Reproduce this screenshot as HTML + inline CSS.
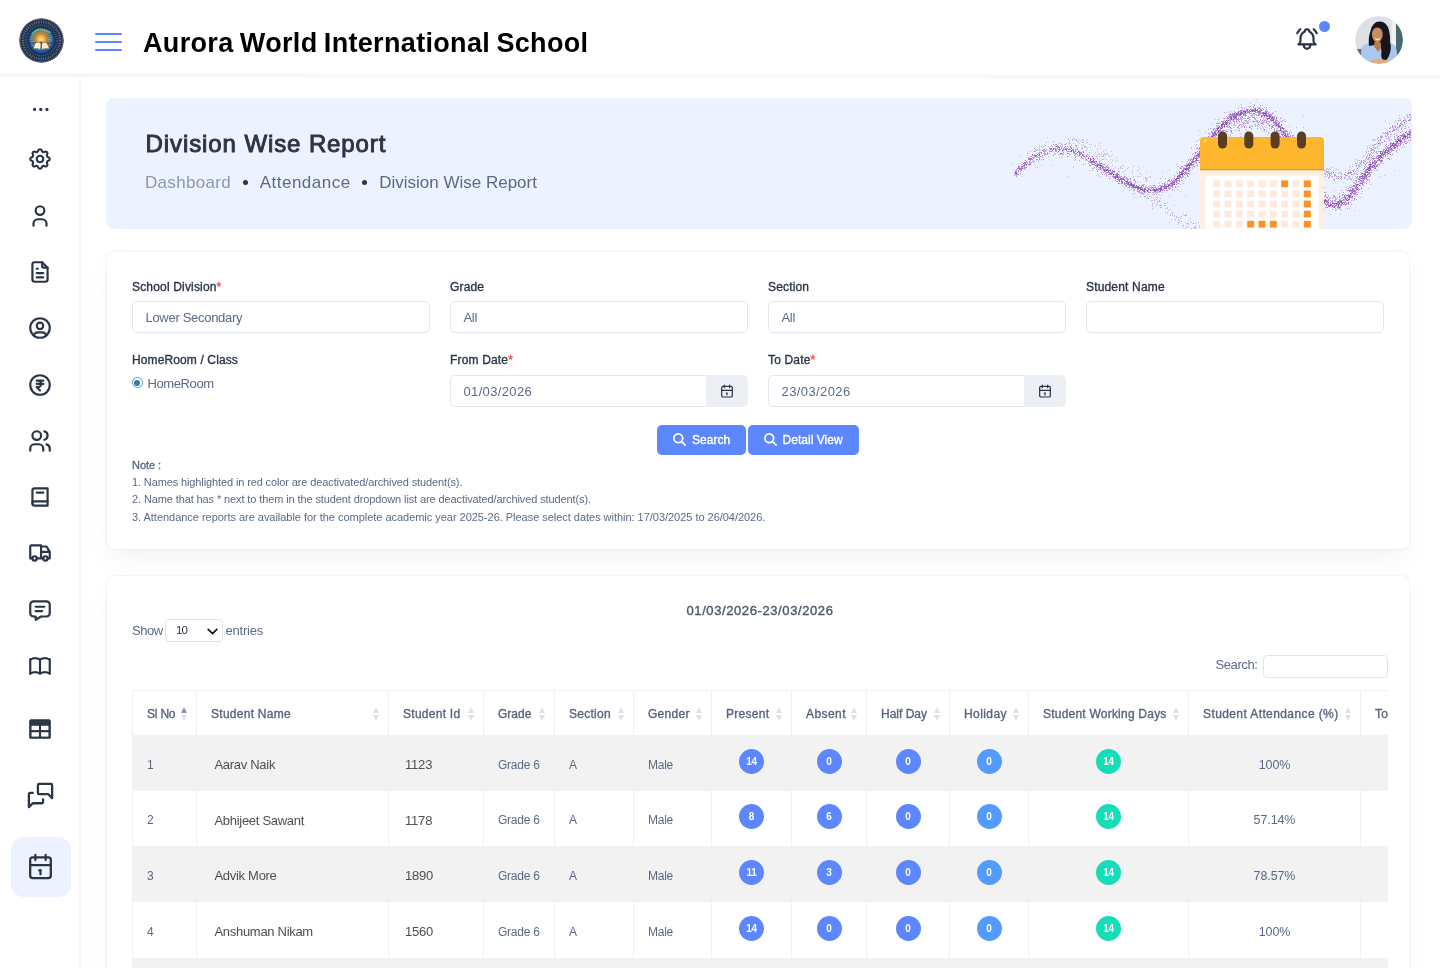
<!DOCTYPE html>
<html lang="en">
<head>
<meta charset="utf-8">
<title>Division Wise Report - Aurora World International School</title>
<style>
*{box-sizing:border-box;margin:0;padding:0}
html,body{width:1440px;height:968px;overflow:hidden;background:#fff}
body{will-change:transform;font-family:"Liberation Sans",sans-serif;color:#5a6a85;position:relative;font-size:12px}
svg{display:block}
.ico{fill:none;stroke:#2a3547;stroke-width:2;stroke-linecap:round;stroke-linejoin:round}

/* header */
header{position:absolute;left:0;top:0;width:1440px;height:73px;background:#fff;z-index:5}
header:after{content:"";position:absolute;left:-10px;right:-10px;top:73.5px;height:4.3px;background:#f7f7f7;transform:rotate(.075deg)}
.logo{position:absolute;left:19px;top:18px;width:45px;height:45px;border-radius:50%;overflow:hidden}
.burger{position:absolute;left:95px;top:32px;width:27px;height:19px}
.burger i{position:absolute;left:0;width:27px;height:1.8px;background:#5d87ff;border-radius:1px}
.school{position:absolute;left:143px;top:23.5px;font-size:27px;line-height:38px;font-weight:700;color:#000;letter-spacing:.33px;word-spacing:-1.5px;white-space:nowrap}
.bell{position:absolute;left:1294px;top:26px;width:26px;height:26px}
.dot{position:absolute;left:1319px;top:21px;width:11px;height:11px;border-radius:50%;background:#5d87ff}
.avatar{position:absolute;left:1355px;top:16px;width:48px;height:48px;border-radius:50%;overflow:hidden}

/* sidebar */
aside{position:absolute;left:0;top:74px;width:81px;height:894px;background:#fff;border-right:2px solid #f6f6f6}
aside .it{position:absolute;left:27px;width:26px;height:26px}
aside .act{position:absolute;left:11px;top:763px;width:60px;height:60px;border-radius:13px;background:#ecf2ff}

/* main */
main{position:absolute;left:81px;top:74px;width:1359px;height:894px}
.banner{position:absolute;left:25px;top:24px;width:1306px;height:131px;background:#ecf2ff;border-radius:8px;overflow:hidden}
.banner h1{position:absolute;left:39.6px;top:30.4px;font-size:24px;line-height:32px;font-weight:400;-webkit-text-stroke:.95px #2a3547;color:#2a3547;letter-spacing:.9px;white-space:nowrap}
.crumbs{position:absolute;left:39px;top:73px;font-size:17px;line-height:24px;color:#5a6a85;white-space:nowrap}
.crumbs .m{color:#8a98ae}
.crumbs b{display:inline-block;width:5px;height:5px;border-radius:50%;background:#2a3547;margin:0 12px 2px 12px;vertical-align:middle}
.card{position:absolute;background:#fff;border-radius:7px;box-shadow:0 0 2px rgba(145,158,171,.3),0 12px 24px -4px rgba(145,158,171,.12)}

/* form card */
.f{left:26px;top:178px;width:1302px;height:297px}
.f label{position:absolute;margin-top:1px;font-size:12px;line-height:16px;font-weight:400;-webkit-text-stroke:.35px #2a3547;color:#2a3547;letter-spacing:.17px;white-space:nowrap}
.f label em{color:#fa3e3e;font-style:normal;-webkit-text-stroke:.3px #fa3e3e}
.inp{position:absolute;height:32px;width:298px;border:1px solid #e1e7f1;border-radius:5px;background:#fff;font-size:13px;line-height:32px;padding-left:12.5px;color:#5a6a85;letter-spacing:-.3px;white-space:nowrap}
.inp.d{width:257px;border-radius:5px 0 0 5px}
.add{position:absolute;width:42px;height:32px;background:#ecf0f5;border-radius:0 5px 5px 0}
.add svg{position:absolute;left:13px;top:8px;stroke-width:1.8}
.radio{position:absolute;left:24.5px;top:125px;width:11px;height:11px;border-radius:50%;border:1px solid #5b95be;background:#fff}
.radio:after{content:"";position:absolute;left:1.5px;top:1.5px;width:6px;height:6px;border-radius:50%;background:#2e7d9f}
.rlab{position:absolute;left:40.5px;top:124px;font-size:13px;line-height:16px;color:#5a6a85;letter-spacing:-.4px}
.btn{position:absolute;top:172.5px;height:30px;background:#5d87ff;border-radius:5px;color:#fff;font-size:12px;font-weight:400;-webkit-text-stroke:.35px #fff;line-height:30px;white-space:nowrap;letter-spacing:.03px}
.btn svg{position:absolute;left:15px;top:7px;stroke:#fff;stroke-width:2.8}
.btn span{position:absolute;left:35px;top:0}
.note{position:absolute;left:25px;font-size:11px;line-height:14px;color:#5a6a85;white-space:nowrap;letter-spacing:-.04px}
.note.h{-webkit-text-stroke:.35px #5a6a85;color:#5a6a85;letter-spacing:-.05px}

/* table card */
.t{left:26px;top:502px;width:1302px;height:520px}
.rng{position:absolute;left:0;top:25.6px;width:1306px;text-align:center;font-size:13px;line-height:18px;font-weight:400;-webkit-text-stroke:.35px #46566b;color:#46566b;letter-spacing:.6px}
.len{position:absolute;left:25px;top:46.6px;font-size:13px;line-height:16px;color:#5a6a85;white-space:nowrap;letter-spacing:-.5px}
.sel{position:absolute;left:58px;top:43px;width:58px;height:23px;border:1px solid #dfe5ef;border-radius:4px;background:#fff;font-size:11.5px;line-height:21px;color:#2a3547;padding-left:10px;letter-spacing:-.9px}
.sel svg{position:absolute;left:40px;top:5px;stroke:#111;stroke-width:3}
.ent{position:absolute;left:118.5px;top:46.6px;font-size:13px;line-height:16px;color:#5a6a85;letter-spacing:-.2px}
.sl{position:absolute;left:1108.5px;top:81px;font-size:13px;line-height:16px;color:#5a6a85;letter-spacing:-.4px}
.sb{position:absolute;left:1155.5px;top:78.5px;width:125px;height:23px;border:1px solid #dfe5ef;border-radius:4px;background:#fff}
.tw{position:absolute;left:25px;top:114px;width:1256px;height:360px;overflow:hidden}
table{border-collapse:separate;border-spacing:0;table-layout:fixed;width:1400px}
th,td{border-left:1px solid #eef1f7;overflow:hidden;white-space:nowrap}
th{height:45px;border-top:1px solid #eef1f7;font-size:12px;font-weight:400;-webkit-text-stroke:.35px #56657f;color:#56657f;text-align:left;padding:1px 0 0 14px;position:relative;letter-spacing:.27px;background:#fff}
th:before,th:after{content:"";position:absolute;right:9px;border:3.5px solid transparent}
th:before{top:13px;border-bottom:6px solid #dde1ea}
th:after{top:23.5px;border-top:6px solid #dde1ea}
th.asc:before{border-bottom-color:#8e9ab3}
td{height:56px;font-size:12px;color:#5a6a85;padding:3px 0 0 14px;letter-spacing:-.25px}
tr.o td{background:#f2f2f2}
tr.s td{height:55px}
td.n{font-size:13px;color:#4f4f4f;padding-left:17.5px;letter-spacing:-.3px}
td.i{font-size:13px;color:#4f4f4f;padding-left:16px;letter-spacing:-.2px}
td.c{text-align:center;padding:0}
td.c b{display:inline-block;width:25px;height:25px;border-radius:50%;background:#5d87ff;color:#fff;font-size:10px;line-height:25px;font-weight:700;text-align:center;letter-spacing:-.3px;position:relative;top:-2px}
td.c b.h{background:#539bff}
td.c b.w{background:#13deb9}
td.p{text-align:center;padding:3px 0 0 0;font-size:12.5px;letter-spacing:-.1px}
</style>
</head>
<body>
<header>
  <div class="logo"><svg width="45" height="45" viewBox="0 0 45 45"><defs><radialGradient id="lg1" cx=".5" cy=".45" r=".55"><stop offset="0" stop-color="#3f8fc4"/><stop offset=".7" stop-color="#2766a3"/><stop offset="1" stop-color="#1c4f8a"/></radialGradient><radialGradient id="lg2"><stop offset="0" stop-color="#ffe9b0"/><stop offset=".5" stop-color="#f39a1c"/><stop offset="1" stop-color="#e08a12" stop-opacity=".0"/></radialGradient></defs>
<circle cx="22.5" cy="22.5" r="22.3" fill="#14305c"/>
<circle cx="22.5" cy="22.5" r="21.6" fill="none" stroke="#a8865a" stroke-width=".9" stroke-opacity=".75"/>
<circle cx="22.5" cy="22.5" r="18.6" fill="none" stroke="#c79c5e" stroke-width="2.6" stroke-dasharray="1.1 1.3" stroke-opacity=".55"/>
<circle cx="22.5" cy="22.5" r="15.2" fill="none" stroke="#b08a55" stroke-width="2" stroke-dasharray=".9 1.2" stroke-opacity=".5"/>
<circle cx="22.5" cy="22.5" r="12.6" fill="url(#lg1)"/>
<path d="M13 16q5 -6 10 -4.5t9 3" fill="none" stroke="#4fd0b0" stroke-width="1.6" stroke-opacity=".7"/>
<circle cx="22" cy="21.5" r="8.8" fill="none" stroke="#e8a13a" stroke-width="4" stroke-dasharray="1 1.1" stroke-opacity=".8"/>
<circle cx="22" cy="21.4" r="8.8" fill="url(#lg2)"/>
<path d="M10.5 24.5h24v1.2h-24z" fill="#1b3d6d" fill-opacity=".6"/>
<path d="M14.5 30.5l2.2 -5.2q3 -1.2 5 .6v5q-3.4 -1.3 -7.2 -.4z" fill="#fff3e0"/><path d="M30 30.5l-2.2 -5.2q-3 -1.2 -5 .6v5q3.4 -1.3 7.2 -.4z" fill="#fde7cb"/>
<path d="M22.2 23v8" stroke="#1d4a6d" stroke-width=".9"/>
</svg></div>
  <div class="burger"><i style="top:1px"></i><i style="top:9px"></i><i style="top:17px"></i></div>
  <div class="school">Aurora World International School</div>
  <div class="bell"><svg class="ico" width="26" height="26" viewBox="0 0 24 24"><path d="M10 5a2 2 0 0 1 4 0a7 7 0 0 1 4 6v3a4 4 0 0 0 2 3h-16a4 4 0 0 0 2 -3v-3a7 7 0 0 1 4 -6"/><path d="M9 17v1a3 3 0 0 0 6 0v-1"/><path d="M21 6.727a11.05 11.05 0 0 0 -2.794 -3.727"/><path d="M3 6.727a11.05 11.05 0 0 1 2.792 -3.727"/></svg></div>
  <div class="dot"></div>
  <div class="avatar"><svg width="48" height="48" viewBox="0 0 48 48"><defs><filter id="bl" x="-10%" y="-10%" width="120%" height="120%"><feGaussianBlur stdDeviation=".55"/></filter><clipPath id="ac"><circle cx="24" cy="24" r="24"/></clipPath></defs>
<g clip-path="url(#ac)"><g filter="url(#bl)">
<rect x="-2" y="-2" width="52" height="52" fill="#dde0e5"/>
<rect x="36.5" y="-2" width="5" height="52" fill="#f0f1f2"/>
<rect x="41" y="-2" width="10" height="46" fill="#466a6c"/>
<rect x="-2" y="33" width="9" height="6" fill="#6d7073"/>
<path d="M5 50l1.5 -17q1 -5 9 -6l14 -1q9 1 11.500 5l3 19z" fill="#a9c8ec"/>
<path d="M14 30q-1 -8 1.500 -15q2 -9.500 9 -9.500q7.500 0 9.500 9q1.500 7 1 11q2 7 -.5 13q-2 6 -6 6.500q-3 -3 -2 -9l-1 -8z" fill="#17161b"/>
<path d="M19.500 26h6l.5 6l-3 4l-4 -6z" fill="#b87b52"/>
<ellipse cx="22.300" cy="18.600" rx="5.400" ry="7.600" fill="#c98d60"/>
<path d="M16.500 15q1 -6 6 -6.500q4.500 .5 6 6.500q-3 -3.500 -6.500 -3.500q-3 0 -5.500 3.500z" fill="#17161b"/>
<path d="M19.500 21.500q3 2.500 6 0q-1 2.800 -3 2.800t-3 -2.800z" fill="#f4ece6"/>
<ellipse cx="24.500" cy="45.800" rx="9" ry="2.600" fill="#e2aa7e"/>
</g></g></svg></div>
</header>
<aside>
  <div class="act"></div>
  <div class="it" style="top:22px"><svg class="ico" width="26" height="26" viewBox="0 0 24 24"><g fill="#2a3547" stroke="none"><circle cx="7" cy="12.4" r="1.45"/><circle cx="12.7" cy="12.4" r="1.45"/><circle cx="18.4" cy="12.4" r="1.45"/></g></svg></div>
  <div class="it" style="top:72px"><svg class="ico" width="26" height="26" viewBox="0 0 24 24"><path d="M10.325 4.317c.426 -1.756 2.924 -1.756 3.35 0a1.724 1.724 0 0 0 2.573 1.066c1.543 -.94 3.31 .826 2.37 2.37a1.724 1.724 0 0 0 1.065 2.572c1.756 .426 1.756 2.924 0 3.35a1.724 1.724 0 0 0 -1.066 2.573c.94 1.543 -.826 3.31 -2.37 2.37a1.724 1.724 0 0 0 -2.572 1.065c-.426 1.756 -2.924 1.756 -3.35 0a1.724 1.724 0 0 0 -2.573 -1.066c-1.543 .94 -3.31 -.826 -2.37 -2.37a1.724 1.724 0 0 0 -1.065 -2.572c-1.756 -.426 -1.756 -2.924 0 -3.35a1.724 1.724 0 0 0 1.066 -2.573c-.94 -1.543 .826 -3.31 2.37 -2.37c1 .608 2.296 .07 2.572 -1.065z"/><path d="M9 12a3 3 0 1 0 6 0a3 3 0 0 0 -6 0"/></svg></div>
  <div class="it" style="top:129px"><svg class="ico" width="26" height="26" viewBox="0 0 24 24"><path d="M8 7a4 4 0 1 0 8 0a4 4 0 0 0 -8 0"/><path d="M6 21v-2a4 4 0 0 1 4 -4h4a4 4 0 0 1 4 4v2"/></svg></div>
  <div class="it" style="top:185px"><svg class="ico" width="26" height="26" viewBox="0 0 24 24"><path d="M14 3v4a1 1 0 0 0 1 1h4"/><path d="M17 21h-10a2 2 0 0 1 -2 -2v-14a2 2 0 0 1 2 -2h7l5 5v11a2 2 0 0 1 -2 2z"/><path d="M9 9l1 0"/><path d="M9 13l6 0"/><path d="M9 17l6 0"/></svg></div>
  <div class="it" style="top:241px"><svg class="ico" width="26" height="26" viewBox="0 0 24 24"><path d="M12 12m-9 0a9 9 0 1 0 18 0a9 9 0 1 0 -18 0"/><path d="M12 10m-3 0a3 3 0 1 0 6 0a3 3 0 1 0 -6 0"/><path d="M6.168 18.849a4 4 0 0 1 3.832 -2.849h4a4 4 0 0 1 3.834 2.855"/></svg></div>
  <div class="it" style="top:298px"><svg class="ico" width="26" height="26" viewBox="0 0 24 24"><path d="M12 12m-9 0a9 9 0 1 0 18 0a9 9 0 1 0 -18 0"/><path d="M15 8h-6h1a3 3 0 0 1 0 6h-1l3 3"/><path d="M9 11h6"/></svg></div>
  <div class="it" style="top:354px"><svg class="ico" width="26" height="26" viewBox="0 0 24 24"><path d="M9 7m-4 0a4 4 0 1 0 8 0a4 4 0 1 0 -8 0"/><path d="M3 21v-2a4 4 0 0 1 4 -4h4a4 4 0 0 1 4 4v2"/><path d="M16 3.13a4 4 0 0 1 0 7.75"/><path d="M21 21v-2a4 4 0 0 0 -3 -3.85"/></svg></div>
  <div class="it" style="top:410px"><svg class="ico" width="26" height="26" viewBox="0 0 24 24"><path d="M19 4v16h-12a2 2 0 0 1 -2 -2v-12a2 2 0 0 1 2 -2h12z"/><path d="M19 16h-12a2 2 0 0 0 -2 2"/><path d="M9 8h6"/></svg></div>
  <div class="it" style="top:466px"><svg class="ico" width="26" height="26" viewBox="0 0 24 24"><path d="M7 17m-2 0a2 2 0 1 0 4 0a2 2 0 1 0 -4 0"/><path d="M17 17m-2 0a2 2 0 1 0 4 0a2 2 0 1 0 -4 0"/><path d="M5 17h-2v-11a1 1 0 0 1 1 -1h9v12m-4 0h6m4 0h2v-6h-8m0 -5h5l3 5"/></svg></div>
  <div class="it" style="top:523px"><svg class="ico" width="26" height="26" viewBox="0 0 24 24"><path d="M8 9h8"/><path d="M8 13h6"/><path d="M18 4a3 3 0 0 1 3 3v8a3 3 0 0 1 -3 3h-5l-5 3v-3h-2a3 3 0 0 1 -3 -3v-8a3 3 0 0 1 3 -3h12z"/></svg></div>
  <div class="it" style="top:579px"><svg class="ico" width="26" height="26" viewBox="0 0 24 24"><path d="M3 19a9 9 0 0 1 9 0a9 9 0 0 1 9 0"/><path d="M3 6a9 9 0 0 1 9 0a9 9 0 0 1 9 0"/><path d="M3 6l0 13"/><path d="M12 6l0 13"/><path d="M21 6l0 13"/></svg></div>
  <div class="it" style="top:642px"><svg class="ico" width="26" height="26" viewBox="0 0 24 24"><rect x="2" y="3" width="20" height="18" rx="1.5" fill="#2a3547" stroke="none"/><rect x="4.2" y="9" width="6.8" height="4" fill="#fff" stroke="none"/><rect x="13" y="9" width="6.8" height="4" fill="#fff" stroke="none"/><rect x="4.2" y="15" width="6.8" height="4" fill="#fff" stroke="none"/><rect x="13" y="15" width="6.8" height="4" fill="#fff" stroke="none"/></svg></div>
  <div class="it" style="top:706.3px;left:24.5px;width:31px;height:31px"><svg class="ico" width="31" height="31" viewBox="0 0 24 24" style="stroke-width:1.75"><path d="M21 14l-3 -3h-7a1 1 0 0 1 -1 -1v-6a1 1 0 0 1 1 -1h9a1 1 0 0 1 1 1v10"/><path d="M14 15v2a1 1 0 0 1 -1 1h-7l-3 3v-10a1 1 0 0 1 1 -1h2"/></svg></div>
  <div class="it" style="top:776.5px;left:24.5px;width:31px;height:31px"><svg class="ico" width="31" height="31" viewBox="0 0 24 24" style="stroke-width:1.75"><path d="M4 7a2 2 0 0 1 2 -2h12a2 2 0 0 1 2 2v12a2 2 0 0 1 -2 2h-12a2 2 0 0 1 -2 -2z"/><path d="M16 3v4"/><path d="M8 3v4"/><path d="M4 11h16"/><path d="M11 15h1"/><path d="M12 15v3"/></svg></div>
</aside>
<main>
  <section class="banner">
    <svg class="art" width="1306" height="132" viewBox="0 0 1306 132" style="position:absolute;left:0;top:-1px"><g transform="translate(0,.5)" style="filter:blur(.3px)"><path d="M1000 69h1M1000 69h1M1000 69h1M1000 72h1M1000 72h1M1000 73h1M1000 73h1M1000 73h1M1000 75h1M1000 75h1M1000 77h1M1000 78h1M1001 68h1M1001 70h1M1001 70h1M1001 72h1M1001 72h1M1001 73h1M1001 75h1M1001 75h1M1002 71h1M1003 73h1M1003 75h1M1003 77h1M1004 72h1M1004 76h1M1004 76h1M1004 77h1M1005 76h1M1005 76h1M1005 76h1M1005 77h1M1006 73h1M1006 75h1M1006 79h1M1007 74h1M1007 74h1M1007 77h1M1007 77h1M1007 77h1M1007 80h1M1008 74h1M1008 75h1M1008 79h1M1008 80h1M1008 80h1M1009 77h1M1009 77h1M1009 81h1M1009 81h1M1009 81h1M1009 83h1M1010 76h1M1010 78h1M1010 79h1M1010 80h1M1011 76h1M1011 77h1M1011 77h1M1011 78h1M1011 78h1M1011 78h1M1011 79h1M1011 79h1M1011 79h1M1011 80h1M1011 82h1M1011 84h1M1012 74h1M1012 80h1M1012 83h1M1012 86h1M1013 74h1M1013 78h1M1013 79h1M1013 80h1M1013 82h1M1013 84h1M1013 84h1M1013 86h1M1014 81h1M1014 81h1M1014 82h1M1014 82h1M1014 82h1M1015 81h1M1015 82h1M1015 85h1M1015 86h1M1016 81h1M1016 82h1M1016 82h1M1016 84h1M1016 85h1M1016 85h1M1016 85h1M1016 86h1M1017 80h1M1017 81h1M1017 81h1M1017 81h1M1017 82h1M1017 82h1M1018 79h1M1018 80h1M1018 83h1M1018 85h1M1018 86h1M1019 79h1M1019 83h1M1019 88h1M1020 80h1M1020 84h1M1020 84h1M1020 85h1M1020 86h1M1020 86h1M1020 88h1M1020 88h1M1020 89h1M1021 81h1M1021 83h1M1021 84h1M1021 84h1M1021 85h1M1021 85h1M1021 87h1M1021 87h1M1022 82h1M1022 85h1M1022 85h1M1022 86h1M1022 86h1M1022 86h1M1022 87h1M1023 84h1M1023 85h1M1023 87h1M1023 87h1M1023 88h1M1023 89h1M1023 89h1M1023 90h1M1024 81h1M1024 81h1M1024 82h1M1024 84h1M1024 87h1M1024 87h1M1025 86h1M1025 86h1M1025 87h1M1025 87h1M1025 88h1M1025 89h1M1025 90h1M1026 87h1M1026 88h1M1027 87h1M1027 88h1M1027 88h1M1027 90h1M1027 91h1M1027 93h1M1028 82h1M1028 83h1M1028 86h1M1028 87h1M1028 88h1M1028 88h1M1028 88h1M1028 88h1M1028 89h1M1028 90h1M1028 92h1M1028 96h1M1029 84h1M1029 85h1M1029 89h1M1029 90h1M1029 90h1M1029 91h1M1030 88h1M1030 88h1M1030 89h1M1030 90h1M1031 90h1M1031 91h1M1031 93h1M1031 94h1M1032 89h1M1032 90h1M1032 90h1M1032 92h1M1032 94h1M1033 88h1M1033 90h1M1033 91h1M1033 93h1M1033 93h1M1033 95h1M1034 90h1M1034 90h1M1034 91h1M1034 91h1M1034 92h1M1034 92h1M1034 92h1M1035 88h1M1035 92h1M1036 88h1M1036 90h1M1036 92h1M1036 93h1M1036 96h1M1037 87h1M1037 88h1M1037 89h1M1038 91h1M1038 92h1M1038 92h1M1038 93h1M1038 94h1M1038 95h1M1038 95h1M1039 90h1M1039 92h1M1039 94h1M1039 96h1M1040 84h1M1041 90h1M1041 93h1M1042 91h1M1042 92h1M1042 93h1M1042 94h1M1042 95h1M1043 95h1M1044 88h1M1044 92h1M1044 92h1M1044 93h1M1045 90h1M1045 91h1M1046 90h1M1047 88h1M1047 90h1M1047 92h1M1047 93h1M1047 95h1M1048 88h1M1048 90h1M1048 92h1M1048 94h1M1048 94h1M1049 92h1M1049 92h1M1049 94h1M1049 94h1M1049 96h1M1050 91h1M1050 93h1M1050 93h1M1050 93h1M1050 95h1M1050 97h1M1051 91h1M1051 95h1M1052 89h1M1052 91h1M1052 91h1M1053 88h1M1053 91h1M1053 94h1M1054 88h1M1054 89h1M1054 91h1M1054 92h1M1054 92h1M1054 93h1M1054 93h1M1054 93h1M1054 94h1M1055 89h1M1055 90h1M1055 91h1M1055 91h1M1055 91h1M1055 92h1M1056 86h1M1056 88h1M1056 89h1M1056 95h1M1057 89h1M1057 89h1M1057 91h1M1058 86h1M1058 87h1M1058 90h1M1058 90h1M1058 93h1M1059 85h1M1059 87h1M1059 88h1M1059 89h1M1059 91h1M1060 89h1M1060 91h1M1060 93h1M1061 84h1M1061 86h1M1061 87h1M1061 93h1M1062 83h1M1062 83h1M1062 88h1M1062 88h1M1062 89h1M1062 89h1M1062 90h1M1062 91h1M1063 82h1M1063 84h1M1063 87h1M1063 87h1M1063 88h1M1063 91h1M1063 92h1M1064 88h1M1064 88h1M1064 90h1M1065 83h1M1065 83h1M1065 83h1M1065 85h1M1065 86h1M1065 87h1M1065 88h1M1065 89h1M1066 85h1M1066 86h1M1066 87h1M1066 88h1M1066 88h1M1066 89h1M1066 90h1M1066 92h1M1067 82h1M1067 83h1M1067 84h1M1067 85h1M1067 87h1M1067 87h1M1068 78h1M1068 79h1M1068 81h1M1068 83h1M1068 84h1M1068 87h1M1068 87h1M1068 87h1M1068 87h1M1069 82h1M1069 89h1M1070 81h1M1070 82h1M1070 82h1M1070 84h1M1070 85h1M1070 87h1M1071 79h1M1071 79h1M1071 79h1M1071 80h1M1071 80h1M1071 81h1M1071 83h1M1071 86h1M1072 69h1M1072 78h1M1072 78h1M1072 79h1M1072 80h1M1072 81h1M1072 81h1M1072 81h1M1072 83h1M1072 86h1M1073 74h1M1073 75h1M1073 75h1M1073 76h1M1073 77h1M1073 78h1M1073 78h1M1073 78h1M1073 79h1M1073 79h1M1073 80h1M1073 82h1M1073 83h1M1073 84h1M1073 84h1M1074 70h1M1074 71h1M1074 75h1M1074 75h1M1074 77h1M1074 78h1M1074 80h1M1075 69h1M1075 71h1M1075 74h1M1075 75h1M1075 76h1M1075 76h1M1075 76h1M1075 77h1M1075 81h1M1076 69h1M1076 76h1M1076 76h1M1076 76h1M1076 76h1M1076 77h1M1076 79h1M1076 80h1M1076 83h1M1077 70h1M1077 72h1M1077 73h1M1077 73h1M1077 74h1M1077 74h1M1077 74h1M1077 76h1M1077 79h1M1078 68h1M1078 72h1M1078 77h1M1079 68h1M1079 71h1M1079 72h1M1079 76h1M1079 76h1M1079 76h1M1079 80h1M1079 80h1M1080 67h1M1080 68h1M1080 68h1M1080 70h1M1080 71h1M1080 72h1M1081 64h1M1081 67h1M1081 67h1M1081 69h1M1081 72h1M1081 72h1M1081 76h1M1081 78h1M1082 62h1M1082 66h1M1082 67h1M1082 68h1M1082 68h1M1082 70h1M1082 72h1M1082 73h1M1082 74h1M1082 76h1M1082 76h1M1082 79h1M1083 68h1M1083 70h1M1083 71h1M1083 73h1M1083 74h1M1083 77h1M1084 63h1M1084 66h1M1084 67h1M1084 67h1M1084 68h1M1084 70h1M1085 62h1M1085 64h1M1085 65h1M1085 66h1M1085 66h1M1085 66h1M1085 67h1M1085 67h1M1086 57h1M1086 64h1M1086 65h1M1086 65h1M1086 67h1M1086 68h1M1087 60h1M1087 62h1M1087 65h1M1087 67h1M1087 67h1M1087 69h1M1088 59h1M1088 60h1M1088 65h1M1088 69h1M1089 55h1M1089 56h1M1089 58h1M1089 59h1M1089 61h1M1090 51h1M1090 58h1M1090 59h1M1090 61h1M1090 61h1M1090 62h1M1090 63h1M1090 63h1M1090 65h1M1090 66h1M1091 50h1M1091 54h1M1091 58h1M1091 58h1M1091 60h1M1091 61h1M1091 63h1M1091 63h1M1091 68h1M1091 68h1M1092 52h1M1092 57h1M1092 57h1M1092 58h1M1092 59h1M1092 59h1M1092 60h1M1092 63h1M1093 51h1M1093 52h1M1093 54h1M1093 54h1M1093 56h1M1093 57h1M1093 58h1M1093 58h1M1093 63h1M1093 65h1M1093 65h1M1094 51h1M1094 53h1M1094 53h1M1094 53h1M1094 57h1M1094 57h1M1094 58h1M1094 58h1M1095 48h1M1095 53h1M1095 54h1M1095 57h1M1096 47h1M1096 48h1M1096 49h1M1096 50h1M1096 50h1M1096 52h1M1096 53h1M1096 54h1M1097 46h1M1097 47h1M1097 49h1M1097 50h1M1097 51h1M1097 51h1M1097 51h1M1097 51h1M1097 52h1M1097 52h1M1097 53h1M1097 55h1M1097 56h1M1098 46h1M1098 48h1M1098 50h1M1098 51h1M1098 53h1M1098 55h1M1099 43h1M1099 43h1M1099 45h1M1099 46h1M1099 46h1M1099 47h1M1099 47h1M1099 48h1M1099 48h1M1099 49h1M1099 50h1M1100 42h1M1100 44h1M1100 44h1M1100 44h1M1100 45h1M1100 46h1M1100 46h1M1100 46h1M1100 51h1M1100 52h1M1101 41h1M1101 42h1M1101 45h1M1101 45h1M1101 45h1M1102 39h1M1102 39h1M1102 41h1M1102 41h1M1102 43h1M1102 44h1M1102 45h1M1102 45h1M1102 46h1M1102 46h1M1102 47h1M1102 48h1M1103 36h1M1103 37h1M1103 40h1M1103 43h1M1103 44h1M1103 44h1M1103 45h1M1103 46h1M1103 46h1M1103 47h1M1103 47h1M1103 50h1M1104 31h1M1104 41h1M1104 42h1M1104 43h1M1104 48h1M1105 34h1M1105 35h1M1105 39h1M1105 40h1M1105 44h1M1105 45h1M1106 35h1M1106 36h1M1106 36h1M1106 38h1M1106 39h1M1106 40h1M1106 41h1M1106 43h1M1106 46h1M1106 46h1M1107 32h1M1107 32h1M1107 33h1M1107 39h1M1107 40h1M1107 40h1M1107 41h1M1107 42h1M1108 31h1M1108 34h1M1108 35h1M1108 37h1M1108 37h1M1108 38h1M1108 41h1M1108 43h1M1109 32h1M1109 33h1M1109 35h1M1109 36h1M1109 36h1M1109 39h1M1109 41h1M1110 26h1M1110 29h1M1110 31h1M1110 31h1M1110 36h1M1110 37h1M1110 38h1M1110 42h1M1111 26h1M1111 29h1M1111 31h1M1111 32h1M1111 33h1M1111 35h1M1112 22h1M1112 26h1M1112 26h1M1112 28h1M1112 30h1M1112 31h1M1112 31h1M1112 31h1M1112 34h1M1112 34h1M1112 35h1M1112 37h1M1112 43h1M1113 29h1M1113 29h1M1113 29h1M1113 29h1M1113 33h1M1113 34h1M1113 38h1M1113 38h1M1114 30h1M1114 36h1M1115 24h1M1115 27h1M1115 28h1M1115 29h1M1115 31h1M1115 34h1M1116 24h1M1116 27h1M1116 27h1M1116 28h1M1116 28h1M1116 30h1M1116 30h1M1117 24h1M1117 25h1M1117 26h1M1117 26h1M1117 33h1M1117 33h1M1118 21h1M1118 21h1M1118 23h1M1118 25h1M1118 27h1M1118 28h1M1118 28h1M1118 29h1M1118 29h1M1118 29h1M1118 30h1M1119 24h1M1119 25h1M1119 25h1M1119 26h1M1120 23h1M1120 26h1M1120 27h1M1120 29h1M1121 20h1M1121 21h1M1121 23h1M1121 24h1M1121 25h1M1121 26h1M1121 29h1M1122 19h1M1122 21h1M1122 23h1M1122 25h1M1123 17h1M1123 18h1M1123 19h1M1123 19h1M1123 20h1M1123 20h1M1123 23h1M1123 25h1M1123 26h1M1123 26h1M1123 27h1M1123 30h1M1124 16h1M1124 17h1M1124 17h1M1124 18h1M1124 19h1M1124 21h1M1124 21h1M1124 22h1M1124 23h1M1124 24h1M1125 18h1M1125 19h1M1125 19h1M1125 20h1M1125 20h1M1125 21h1M1125 22h1M1125 22h1M1126 16h1M1126 17h1M1126 17h1M1126 17h1M1126 22h1M1127 16h1M1127 17h1M1127 18h1M1127 22h1M1127 23h1M1127 24h1M1128 14h1M1128 17h1M1128 17h1M1128 17h1M1128 19h1M1128 19h1M1128 21h1M1128 21h1M1128 26h1M1129 15h1M1129 18h1M1129 19h1M1129 20h1M1129 20h1M1129 20h1M1129 21h1M1130 16h1M1130 16h1M1130 18h1M1130 18h1M1130 19h1M1130 21h1M1130 24h1M1131 16h1M1131 16h1M1131 18h1M1132 11h1M1132 14h1M1132 14h1M1132 15h1M1132 15h1M1132 16h1M1132 21h1M1132 21h1M1132 22h1M1132 23h1M1133 14h1M1133 16h1M1133 18h1M1133 19h1M1134 13h1M1134 14h1M1134 16h1M1134 16h1M1134 16h1M1134 17h1M1134 17h1M1134 18h1M1134 20h1M1134 21h1M1135 10h1M1135 13h1M1135 14h1M1135 14h1M1135 15h1M1135 16h1M1135 16h1M1135 17h1M1135 19h1M1135 7h1M1136 11h1M1136 13h1M1136 15h1M1136 16h1M1136 20h1M1136 20h1M1137 15h1M1138 11h1M1138 13h1M1138 14h1M1138 14h1M1138 14h1M1138 15h1M1139 14h1M1139 15h1M1139 15h1M1139 16h1M1139 17h1M1139 18h1M1139 18h1M1140 12h1M1140 14h1M1140 16h1M1141 12h1M1141 12h1M1141 13h1M1141 14h1M1141 15h1M1142 12h1M1142 14h1M1142 15h1M1143 10h1M1143 16h1M1144 12h1M1144 12h1M1144 12h1M1144 14h1M1144 9h1M1145 12h1M1145 13h1M1145 16h1M1145 18h1M1146 14h1M1147 10h1M1147 12h1M1147 13h1M1147 16h1M1147 20h1M1147 9h1M1148 12h1M1148 13h1M1148 14h1M1148 14h1M1148 16h1M1148 8h1M1149 11h1M1149 11h1M1149 12h1M1149 12h1M1149 14h1M1149 15h1M1149 17h1M1150 13h1M1150 13h1M1150 15h1M1151 10h1M1151 12h1M1151 12h1M1151 12h1M1151 13h1M1151 13h1M1151 14h1M1151 15h1M1151 18h1M1152 11h1M1152 14h1M1152 15h1M1152 18h1M1152 18h1M1153 11h1M1153 11h1M1153 14h1M1153 14h1M1153 16h1M1153 17h1M1154 10h1M1154 12h1M1154 14h1M1155 13h1M1155 15h1M1155 19h1M1155 19h1M1155 20h1M1156 15h1M1156 16h1M1156 18h1M1156 23h1M1157 12h1M1157 15h1M1157 18h1M1158 10h1M1158 16h1M1158 16h1M1158 16h1M1158 18h1M1158 18h1M1158 19h1M1158 23h1M1159 13h1M1159 14h1M1159 15h1M1159 18h1M1159 18h1M1160 10h1M1160 12h1M1160 14h1M1160 14h1M1160 15h1M1160 15h1M1160 16h1M1160 18h1M1160 18h1M1160 21h1M1160 23h1M1161 14h1M1161 16h1M1161 19h1M1161 19h1M1161 22h1M1161 22h1M1162 15h1M1162 17h1M1162 21h1M1163 19h1M1163 19h1M1163 21h1M1163 24h1M1164 17h1M1164 18h1M1164 19h1M1164 19h1M1164 19h1M1164 20h1M1164 20h1M1164 23h1M1165 17h1M1165 20h1M1165 21h1M1165 22h1M1165 23h1M1165 29h1M1165 31h1M1166 16h1M1166 16h1M1166 16h1M1166 19h1M1166 20h1M1166 20h1M1166 21h1M1166 22h1M1166 23h1M1166 28h1M1166 29h1M1167 20h1M1167 20h1M1167 21h1M1167 22h1M1167 23h1M1167 23h1M1167 25h1M1167 26h1M1167 28h1M1168 19h1M1168 20h1M1168 21h1M1168 25h1M1168 25h1M1168 26h1M1168 31h1M1169 14h1M1169 23h1M1169 24h1M1169 25h1M1169 27h1M1169 28h1M1170 20h1M1170 21h1M1170 26h1M1170 26h1M1170 27h1M1170 27h1M1170 28h1M1170 29h1M1170 33h1M1171 23h1M1171 25h1M1171 31h1M1171 33h1M1172 24h1M1172 26h1M1172 27h1M1172 28h1M1172 29h1M1172 29h1M1172 30h1M1172 30h1M1172 34h1M1173 25h1M1173 26h1M1173 26h1M1173 28h1M1173 33h1M1174 29h1M1174 30h1M1174 31h1M1174 32h1M1174 32h1M1174 33h1M1174 33h1M1174 33h1M1174 33h1M1174 33h1M1175 27h1M1175 27h1M1175 28h1M1175 30h1M1175 35h1M1175 36h1M1175 37h1M1175 41h1M1176 23h1M1176 30h1M1176 30h1M1176 31h1M1176 34h1M1176 35h1M1176 37h1M1176 41h1M1176 44h1M1177 35h1M1177 35h1M1177 36h1M1177 39h1M1177 39h1M1177 41h1M1178 31h1M1178 33h1M1178 36h1M1178 38h1M1178 38h1M1178 40h1M1178 44h1M1179 33h1M1179 36h1M1179 36h1M1179 37h1M1179 38h1M1179 38h1M1179 38h1M1179 39h1M1179 43h1M1179 47h1M1180 33h1M1180 39h1M1180 39h1M1180 42h1M1180 42h1M1181 34h1M1181 34h1M1181 36h1M1181 37h1M1181 37h1M1181 37h1M1181 39h1M1181 40h1M1181 41h1M1181 42h1M1181 42h1M1181 42h1M1181 42h1M1181 45h1M1181 49h1M1182 37h1M1182 37h1M1182 39h1M1182 40h1M1182 43h1M1182 44h1M1182 46h1M1182 47h1M1182 48h1M1183 35h1M1183 36h1M1183 40h1M1183 40h1M1183 41h1M1183 41h1M1183 42h1M1183 42h1M1183 42h1M1183 42h1M1183 42h1M1183 43h1M1183 48h1M1183 51h1M1184 33h1M1184 38h1M1184 39h1M1184 40h1M1184 42h1M1184 44h1M1184 46h1M1184 48h1M1184 48h1M1184 50h1M1184 65h1M1185 35h1M1185 42h1M1185 43h1M1185 44h1M1185 45h1M1185 46h1M1185 46h1M1185 46h1M1185 48h1M1185 52h1M1185 53h1M1185 54h1M1185 55h1M1185 55h1M1186 38h1M1186 39h1M1186 44h1M1186 48h1M1186 48h1M1186 49h1M1186 50h1M1186 50h1M1186 51h1M1186 54h1M1186 55h1M1186 56h1M1187 38h1M1187 44h1M1187 45h1M1187 47h1M1187 48h1M1187 49h1M1187 50h1M1187 51h1M1187 51h1M1187 51h1M1187 52h1M1187 53h1M1187 53h1M1187 54h1M1187 54h1M1187 54h1M1188 42h1M1188 44h1M1188 48h1M1188 49h1M1188 50h1M1188 51h1M1188 53h1M1188 55h1M1188 55h1M1188 57h1M1188 58h1M1189 48h1M1189 56h1M1189 56h1M1189 56h1M1189 57h1M1189 60h1M1189 60h1M1190 50h1M1190 52h1M1190 53h1M1190 53h1M1190 56h1M1190 57h1M1190 57h1M1190 58h1M1190 58h1M1190 60h1M1190 61h1M1190 62h1M1190 64h1M1191 49h1M1191 50h1M1191 52h1M1191 53h1M1191 54h1M1191 55h1M1191 56h1M1191 56h1M1191 56h1M1191 58h1M1191 60h1M1191 60h1M1191 60h1M1191 62h1M1191 62h1M1191 62h1M1191 63h1M1191 66h1M1192 52h1M1192 56h1M1192 56h1M1192 56h1M1192 58h1M1192 59h1M1192 63h1M1192 64h1M1192 65h1M1192 69h1M1192 74h1M1193 52h1M1193 57h1M1193 61h1M1193 61h1M1193 62h1M1193 64h1M1193 64h1M1193 66h1M1193 69h1M1194 52h1M1194 55h1M1194 56h1M1194 58h1M1194 59h1M1194 60h1M1194 60h1M1194 60h1M1194 60h1M1194 65h1M1194 65h1M1194 66h1M1194 66h1M1194 67h1M1194 73h1M1195 60h1M1195 60h1M1195 61h1M1195 64h1M1195 64h1M1195 78h1M1196 57h1M1196 57h1M1196 61h1M1196 62h1M1196 66h1M1196 67h1M1196 70h1M1196 74h1M1196 75h1M1197 58h1M1197 61h1M1197 64h1M1197 64h1M1197 66h1M1197 67h1M1197 68h1M1197 69h1M1197 71h1M1197 80h1M1198 60h1M1198 63h1M1198 67h1M1198 68h1M1198 68h1M1198 69h1M1198 69h1M1198 70h1M1198 72h1M1198 72h1M1199 58h1M1199 59h1M1199 62h1M1199 64h1M1199 66h1M1199 66h1M1199 67h1M1199 70h1M1199 76h1M1199 78h1M1200 65h1M1200 67h1M1200 68h1M1200 69h1M1200 70h1M1200 72h1M1200 73h1M1200 75h1M1200 78h1M1200 80h1M1200 81h1M1200 84h1M1200 92h1M1201 67h1M1201 71h1M1201 71h1M1201 72h1M1201 75h1M1201 76h1M1201 76h1M1201 78h1M1201 79h1M1201 91h1M1202 65h1M1202 70h1M1202 70h1M1202 74h1M1202 75h1M1202 75h1M1202 75h1M1202 76h1M1202 77h1M1202 79h1M1202 79h1M1202 79h1M1202 79h1M1202 80h1M1202 80h1M1202 81h1M1202 82h1M1202 83h1M1202 83h1M1202 85h1M1202 93h1M1203 67h1M1203 69h1M1203 72h1M1203 73h1M1203 73h1M1203 74h1M1203 75h1M1203 75h1M1203 77h1M1203 78h1M1203 81h1M1203 81h1M1203 81h1M1203 87h1M1203 87h1M1203 87h1M1204 76h1M1204 77h1M1204 77h1M1204 81h1M1204 83h1M1204 83h1M1204 86h1M1204 88h1M1204 89h1M1205 74h1M1205 75h1M1205 78h1M1205 80h1M1205 81h1M1205 82h1M1205 83h1M1205 83h1M1205 84h1M1205 85h1M1205 85h1M1205 86h1M1205 87h1M1205 89h1M1205 91h1M1205 95h1M1205 96h1M1205 98h1M1206 73h1M1206 77h1M1206 81h1M1206 84h1M1206 91h1M1206 94h1M1207 81h1M1207 81h1M1207 83h1M1207 85h1M1207 85h1M1207 85h1M1207 86h1M1207 86h1M1207 86h1M1207 87h1M1207 89h1M1207 92h1M1208 74h1M1208 77h1M1208 81h1M1208 82h1M1208 82h1M1208 84h1M1208 86h1M1208 86h1M1208 88h1M1208 88h1M1208 90h1M1208 90h1M1208 90h1M1208 90h1M1208 91h1M1208 91h1M1208 92h1M1208 92h1M1208 94h1M1208 97h1M1209 101h1M1209 80h1M1209 81h1M1209 85h1M1209 89h1M1209 91h1M1209 91h1M1209 94h1M1209 94h1M1209 95h1M1209 96h1M1209 98h1M1210 100h1M1210 81h1M1210 82h1M1210 86h1M1210 89h1M1210 91h1M1210 92h1M1210 93h1M1210 93h1M1210 94h1M1210 95h1M1210 95h1M1210 99h1M1210 99h1M1211 106h1M1211 108h1M1211 84h1M1211 86h1M1211 90h1M1211 90h1M1211 93h1M1211 94h1M1211 94h1M1211 96h1M1212 101h1M1212 102h1M1212 97h1M1213 100h1M1213 102h1M1214 102h1M1214 104h1M1214 92h1M1214 92h1M1214 93h1M1214 96h1M1214 96h1M1215 100h1M1215 101h1M1215 101h1M1215 106h1M1215 108h1M1215 86h1M1215 94h1M1215 94h1M1215 96h1M1215 99h1M1216 102h1M1216 103h1M1216 104h1M1216 106h1M1216 107h1M1216 96h1M1216 96h1M1216 96h1M1216 97h1M1217 100h1M1217 101h1M1217 101h1M1217 102h1M1217 99h1M1217 99h1M1218 103h1M1218 104h1M1218 104h1M1218 105h1M1218 106h1M1218 106h1M1218 90h1M1218 95h1M1218 99h1M1219 102h1M1219 103h1M1219 104h1M1219 106h1M1219 110h1M1219 97h1M1220 103h1M1220 105h1M1220 105h1M1220 107h1M1220 108h1M1221 100h1M1221 107h1M1221 110h1M1221 110h1M1222 102h1M1222 102h1M1222 103h1M1222 108h1M1222 109h1M1223 108h1M1223 108h1M1223 109h1M1223 109h1M1224 100h1M1224 106h1M1224 107h1M1224 107h1M1224 107h1M1224 108h1M1224 108h1M1224 109h1M1225 107h1M1225 108h1M1226 101h1M1226 103h1M1226 103h1M1226 104h1M1226 105h1M1226 106h1M1226 112h1M1227 105h1M1227 108h1M1227 109h1M1227 110h1M1227 98h1M1227 99h1M1228 103h1M1228 106h1M1228 107h1M1228 109h1M1228 110h1M1228 110h1M1228 110h1M1228 99h1M1229 100h1M1229 100h1M1229 102h1M1229 103h1M1229 106h1M1229 106h1M1229 113h1M1230 106h1M1230 108h1M1230 112h1M1231 104h1M1231 105h1M1231 106h1M1231 109h1M1232 104h1M1232 104h1M1232 107h1M1232 108h1M1232 109h1M1232 111h1M1233 100h1M1233 103h1M1233 105h1M1233 107h1M1233 110h1M1233 110h1M1233 110h1M1233 111h1M1233 99h1M1234 102h1M1234 103h1M1234 104h1M1234 104h1M1234 107h1M1234 108h1M1234 109h1M1234 110h1M1234 112h1M1235 101h1M1235 103h1M1235 104h1M1235 105h1M1235 106h1M1235 107h1M1235 93h1M1236 105h1M1236 106h1M1236 106h1M1236 106h1M1236 97h1M1236 98h1M1237 100h1M1237 102h1M1237 103h1M1237 107h1M1237 107h1M1237 95h1M1237 97h1M1238 100h1M1238 100h1M1238 102h1M1238 105h1M1238 106h1M1238 106h1M1238 98h1M1238 98h1M1239 101h1M1239 102h1M1239 105h1M1239 107h1M1239 108h1M1239 97h1M1240 102h1M1240 102h1M1240 103h1M1240 106h1M1240 106h1M1240 90h1M1240 93h1M1240 98h1M1240 98h1M1241 103h1M1241 103h1M1241 106h1M1241 111h1M1241 93h1M1241 98h1M1242 100h1M1242 102h1M1242 102h1M1242 102h1M1242 103h1M1242 105h1M1242 105h1M1242 106h1M1242 107h1M1242 91h1M1242 93h1M1242 99h1M1243 100h1M1243 101h1M1243 90h1M1243 93h1M1243 98h1M1243 99h1M1244 100h1M1244 105h1M1244 90h1M1244 92h1M1244 96h1M1244 96h1M1244 97h1M1244 98h1M1244 98h1M1244 99h1M1244 99h1M1245 100h1M1245 103h1M1245 90h1M1245 93h1M1245 93h1M1245 93h1M1245 94h1M1245 95h1M1245 96h1M1245 99h1M1246 100h1M1246 92h1M1246 92h1M1246 92h1M1246 92h1M1246 93h1M1246 94h1M1246 99h1M1246 99h1M1246 99h1M1247 103h1M1247 85h1M1247 88h1M1247 91h1M1247 93h1M1247 96h1M1247 96h1M1248 101h1M1248 86h1M1248 88h1M1248 88h1M1248 91h1M1248 93h1M1248 94h1M1248 95h1M1248 96h1M1248 97h1M1248 99h1M1249 83h1M1249 87h1M1249 93h1M1249 96h1M1250 80h1M1250 83h1M1250 84h1M1250 87h1M1250 89h1M1250 89h1M1250 90h1M1250 92h1M1250 93h1M1250 95h1M1250 97h1M1251 79h1M1251 81h1M1251 88h1M1251 90h1M1251 91h1M1251 92h1M1251 92h1M1251 97h1M1252 82h1M1252 84h1M1252 84h1M1252 91h1M1252 92h1M1252 93h1M1252 95h1M1253 79h1M1253 79h1M1253 80h1M1253 82h1M1253 82h1M1253 88h1M1253 88h1M1253 92h1M1254 79h1M1254 80h1M1254 83h1M1254 83h1M1254 83h1M1254 85h1M1255 76h1M1255 81h1M1255 81h1M1255 83h1M1255 84h1M1255 84h1M1255 91h1M1255 96h1M1256 78h1M1256 79h1M1256 79h1M1256 79h1M1256 80h1M1256 81h1M1256 82h1M1256 84h1M1256 85h1M1256 86h1M1256 87h1M1256 87h1M1257 72h1M1257 80h1M1257 81h1M1257 82h1M1257 83h1M1257 84h1M1257 88h1M1258 71h1M1258 74h1M1258 76h1M1258 78h1M1258 80h1M1258 80h1M1258 82h1M1258 85h1M1259 70h1M1259 73h1M1259 78h1M1259 81h1M1260 66h1M1260 72h1M1260 72h1M1260 74h1M1260 78h1M1260 79h1M1260 81h1M1260 81h1M1260 82h1M1260 86h1M1261 62h1M1261 65h1M1261 70h1M1261 72h1M1261 74h1M1261 75h1M1261 75h1M1261 77h1M1261 83h1M1262 70h1M1262 72h1M1262 75h1M1262 76h1M1262 77h1M1262 82h1M1263 64h1M1263 65h1M1263 67h1M1263 68h1M1263 69h1M1263 70h1M1263 71h1M1263 73h1M1263 73h1M1263 75h1M1263 76h1M1263 76h1M1263 79h1M1264 63h1M1264 67h1M1264 69h1M1264 69h1M1264 70h1M1264 71h1M1264 71h1M1264 77h1M1264 77h1M1264 78h1M1265 60h1M1265 70h1M1265 73h1M1265 75h1M1265 75h1M1266 59h1M1266 61h1M1266 61h1M1266 65h1M1266 66h1M1266 66h1M1266 66h1M1266 69h1M1267 61h1M1267 61h1M1267 62h1M1267 66h1M1267 68h1M1267 68h1M1267 69h1M1267 70h1M1268 61h1M1268 63h1M1268 66h1M1268 68h1M1268 69h1M1268 70h1M1268 71h1M1269 63h1M1269 64h1M1269 65h1M1269 67h1M1269 69h1M1269 70h1M1269 71h1M1270 54h1M1270 60h1M1270 61h1M1270 64h1M1270 64h1M1270 65h1M1270 68h1M1270 68h1M1270 69h1M1271 56h1M1271 58h1M1271 59h1M1271 61h1M1271 63h1M1271 63h1M1271 67h1M1271 69h1M1271 72h1M1272 54h1M1272 58h1M1272 59h1M1272 60h1M1272 60h1M1272 61h1M1272 61h1M1272 67h1M1273 48h1M1273 54h1M1273 59h1M1273 59h1M1273 60h1M1273 63h1M1273 67h1M1274 54h1M1274 54h1M1274 55h1M1274 55h1M1274 56h1M1274 59h1M1274 60h1M1274 63h1M1274 63h1M1274 65h1M1275 54h1M1275 57h1M1275 58h1M1275 60h1M1275 60h1M1275 63h1M1275 63h1M1276 55h1M1276 55h1M1276 57h1M1276 60h1M1276 63h1M1276 64h1M1277 52h1M1277 53h1M1277 57h1M1277 57h1M1277 59h1M1277 61h1M1278 52h1M1278 55h1M1278 55h1M1278 57h1M1279 48h1M1279 50h1M1279 51h1M1279 53h1M1279 54h1M1279 54h1M1279 56h1M1279 57h1M1279 58h1M1279 59h1M1280 44h1M1280 47h1M1280 49h1M1280 51h1M1280 52h1M1281 50h1M1281 50h1M1281 51h1M1281 53h1M1281 55h1M1281 57h1M1281 61h1M1282 48h1M1282 51h1M1282 53h1M1282 53h1M1282 53h1M1282 54h1M1282 56h1M1282 61h1M1283 43h1M1283 54h1M1283 55h1M1283 56h1M1283 62h1M1284 45h1M1284 46h1M1284 47h1M1284 47h1M1284 47h1M1284 49h1M1284 53h1M1284 55h1M1284 57h1M1284 57h1M1285 42h1M1285 46h1M1285 48h1M1285 48h1M1285 49h1M1285 51h1M1285 54h1M1286 46h1M1286 46h1M1286 47h1M1286 47h1M1286 48h1M1286 48h1M1286 52h1M1286 53h1M1286 57h1M1286 57h1M1287 46h1M1287 46h1M1287 47h1M1287 53h1M1288 39h1M1288 40h1M1288 47h1M1288 49h1M1288 50h1M1288 51h1M1288 51h1M1289 42h1M1289 42h1M1289 44h1M1289 46h1M1289 50h1M1289 50h1M1289 51h1M1290 38h1M1290 44h1M1290 46h1M1290 47h1M1290 48h1M1290 48h1M1290 49h1M1290 53h1M1291 40h1M1291 41h1M1291 44h1M1291 44h1M1291 45h1M1291 45h1M1291 46h1M1291 48h1M1291 49h1M1291 49h1M1291 50h1M1291 51h1M1292 39h1M1292 41h1M1292 42h1M1292 43h1M1292 46h1M1292 47h1M1292 48h1M1293 43h1M1293 44h1M1293 46h1M1293 48h1M1294 35h1M1294 38h1M1294 40h1M1294 40h1M1294 41h1M1294 42h1M1294 43h1M1294 44h1M1294 44h1M1294 44h1M1294 45h1M1294 45h1M1294 46h1M1294 48h1M1295 38h1M1295 39h1M1295 44h1M1295 44h1M1295 46h1M1296 37h1M1296 38h1M1296 39h1M1296 41h1M1296 41h1M1296 45h1M1297 37h1M1297 38h1M1297 47h1M1298 31h1M1298 40h1M1298 42h1M1298 43h1M1298 44h1M1298 45h1M1299 29h1M1299 35h1M1299 35h1M1299 39h1M1299 40h1M1299 40h1M1299 41h1M1299 44h1M1299 46h1M1300 34h1M1300 44h1M1300 46h1M1301 36h1M1301 39h1M1301 41h1M1301 45h1M1302 30h1M1302 34h1M1302 36h1M1302 40h1M1302 43h1M1303 32h1M1303 38h1M1303 39h1M1303 39h1M1303 40h1M1304 33h1M1304 38h1M1304 40h1M1304 41h1M1304 43h1M908 78h1M909 73h1M909 74h1M909 75h1M909 75h1M909 77h1M910 72h1M910 73h1M910 74h1M910 75h1M910 76h1M910 77h1M910 78h1M910 79h1M911 71h1M911 71h1M911 76h1M911 77h1M912 69h1M912 69h1M912 70h1M912 70h1M912 71h1M912 73h1M912 77h1M913 69h1M913 70h1M913 72h1M913 72h1M914 74h1M914 76h1M915 69h1M915 69h1M915 71h1M915 72h1M915 73h1M915 73h1M916 65h1M916 69h1M916 69h1M916 69h1M916 71h1M917 66h1M917 68h1M918 65h1M918 66h1M918 68h1M918 69h1M918 72h1M919 63h1M919 65h1M919 66h1M919 67h1M919 70h1M919 71h1M920 67h1M920 67h1M920 68h1M920 70h1M921 56h1M921 66h1M922 60h1M922 61h1M922 61h1M922 62h1M922 67h1M923 61h1M923 64h1M923 65h1M923 66h1M923 67h1M923 67h1M924 59h1M924 61h1M924 63h1M924 65h1M924 66h1M924 67h1M924 67h1M925 65h1M926 57h1M926 57h1M926 58h1M926 60h1M926 64h1M927 58h1M927 60h1M927 65h1M928 51h1M928 54h1M928 54h1M928 58h1M928 59h1M928 60h1M928 64h1M929 52h1M929 58h1M930 53h1M930 58h1M930 58h1M930 60h1M930 62h1M931 52h1M931 62h1M932 56h1M932 58h1M932 58h1M932 60h1M933 48h1M933 50h1M933 52h1M933 53h1M933 55h1M933 57h1M933 57h1M933 58h1M933 58h1M933 60h1M933 61h1M933 62h1M934 55h1M934 59h1M935 55h1M935 59h1M935 62h1M936 53h1M936 53h1M936 58h1M936 60h1M937 52h1M937 53h1M937 62h1M938 52h1M938 52h1M938 55h1M938 56h1M938 57h1M939 48h1M939 53h1M939 54h1M939 57h1M940 53h1M941 56h1M941 57h1M943 53h1M943 54h1M943 56h1M944 51h1M944 54h1M945 48h1M945 51h1M945 52h1M945 54h1M945 54h1M946 49h1M947 44h1M947 47h1M947 51h1M947 52h1M947 52h1M947 58h1M948 51h1M948 51h1M948 56h1M949 47h1M949 49h1M949 51h1M949 52h1M949 54h1M949 57h1M950 47h1M950 49h1M950 53h1M950 54h1M951 48h1M951 50h1M951 51h1M951 55h1M952 46h1M952 50h1M952 52h1M952 54h1M952 54h1M953 50h1M953 52h1M953 53h1M953 53h1M953 57h1M954 49h1M954 52h1M954 56h1M954 56h1M955 47h1M955 51h1M955 51h1M955 56h1M955 56h1M956 48h1M956 53h1M956 54h1M956 56h1M956 57h1M957 51h1M957 52h1M957 52h1M957 53h1M957 55h1M957 57h1M958 50h1M959 47h1M959 49h1M959 49h1M959 51h1M959 51h1M959 52h1M960 46h1M960 51h1M960 53h1M960 53h1M961 49h1M961 51h1M961 54h1M961 56h1M961 56h1M961 59h1M962 54h1M963 46h1M963 57h1M964 49h1M964 50h1M964 52h1M964 54h1M965 48h1M965 50h1M965 51h1M965 51h1M965 54h1M965 54h1M966 52h1M966 53h1M967 50h1M967 52h1M967 53h1M967 54h1M967 54h1M967 55h1M968 54h1M968 58h1M969 48h1M969 48h1M969 52h1M969 53h1M969 56h1M969 57h1M969 59h1M969 60h1M970 49h1M970 52h1M970 56h1M971 51h1M971 57h1M972 53h1M972 54h1M972 59h1M973 54h1M973 55h1M973 55h1M973 56h1M973 56h1M973 57h1M973 58h1M973 63h1M974 55h1M974 56h1M974 57h1M974 57h1M975 55h1M975 56h1M975 56h1M975 60h1M975 61h1M976 51h1M976 57h1M976 57h1M977 54h1M977 55h1M977 55h1M977 57h1M977 67h1M978 59h1M978 59h1M978 59h1M978 59h1M979 60h1M979 61h1M979 63h1M980 53h1M980 58h1M980 58h1M980 62h1M980 62h1M981 57h1M981 59h1M982 60h1M982 61h1M982 61h1M982 61h1M982 64h1M982 66h1M983 55h1M983 59h1M983 64h1M983 65h1M983 68h1M984 61h1M984 61h1M984 61h1M984 62h1M984 63h1M984 68h1M985 62h1M985 65h1M986 59h1M986 59h1M986 61h1M986 64h1M986 64h1M986 65h1M986 65h1M986 67h1M986 67h1M986 73h1M987 61h1M987 61h1M987 61h1M987 63h1M987 64h1M987 67h1M987 71h1M988 62h1M988 70h1M989 68h1M989 68h1M990 59h1M990 64h1M990 67h1M990 68h1M990 70h1M990 72h1M991 61h1M991 66h1M991 67h1M991 68h1M991 68h1M991 68h1M991 68h1M991 74h1M992 67h1M992 67h1M992 67h1M992 70h1M992 72h1M993 59h1M993 64h1M993 65h1M993 66h1M993 68h1M993 68h1M994 66h1M994 69h1M994 70h1M994 70h1M994 70h1M994 70h1M994 71h1M994 72h1M994 72h1M995 66h1M995 66h1M995 68h1M995 68h1M995 73h1M995 75h1M996 59h1M996 62h1M996 68h1M996 70h1M996 77h1M997 67h1M997 69h1M997 71h1M997 73h1M997 73h1M997 75h1M998 67h1M998 70h1M998 72h1M998 72h1M998 73h1M998 74h1M998 74h1M998 74h1M999 70h1M999 74h1M999 76h1" stroke="#8a3fb0" stroke-opacity="0.5" stroke-width="1" fill="none"/><path d="M1000 73h1M1000 75h1M1001 72h1M1001 72h1M1001 73h1M1002 70h1M1002 73h1M1002 74h1M1002 74h1M1002 75h1M1002 77h1M1003 73h1M1003 73h1M1003 75h1M1003 76h1M1004 73h1M1004 74h1M1004 76h1M1004 76h1M1004 76h1M1004 76h1M1005 75h1M1005 75h1M1005 77h1M1006 74h1M1006 76h1M1006 76h1M1007 75h1M1007 77h1M1007 78h1M1008 77h1M1008 79h1M1009 79h1M1009 79h1M1009 80h1M1009 80h1M1009 80h1M1010 77h1M1010 78h1M1010 78h1M1010 78h1M1010 80h1M1010 80h1M1011 79h1M1011 79h1M1011 80h1M1011 80h1M1012 80h1M1012 81h1M1012 81h1M1012 82h1M1013 83h1M1013 83h1M1013 83h1M1014 80h1M1015 81h1M1015 82h1M1015 83h1M1015 84h1M1016 84h1M1017 82h1M1018 82h1M1018 83h1M1018 86h1M1018 87h1M1019 84h1M1019 86h1M1020 84h1M1021 82h1M1021 84h1M1021 86h1M1022 85h1M1022 85h1M1022 86h1M1022 86h1M1022 87h1M1024 85h1M1024 86h1M1024 87h1M1024 88h1M1024 88h1M1025 85h1M1025 86h1M1025 86h1M1025 86h1M1025 87h1M1025 88h1M1026 87h1M1026 88h1M1026 88h1M1026 88h1M1026 89h1M1026 90h1M1027 88h1M1027 88h1M1027 88h1M1027 89h1M1027 89h1M1027 90h1M1028 88h1M1028 90h1M1030 89h1M1030 90h1M1031 89h1M1031 90h1M1031 91h1M1031 92h1M1032 89h1M1032 90h1M1032 90h1M1032 90h1M1032 91h1M1032 91h1M1032 91h1M1032 91h1M1033 90h1M1034 90h1M1034 91h1M1034 91h1M1035 89h1M1035 90h1M1035 91h1M1035 92h1M1035 92h1M1036 91h1M1036 92h1M1036 92h1M1036 93h1M1037 92h1M1037 93h1M1037 94h1M1038 91h1M1038 92h1M1038 93h1M1038 93h1M1038 93h1M1038 93h1M1038 94h1M1039 91h1M1039 92h1M1041 94h1M1041 94h1M1042 91h1M1043 92h1M1044 93h1M1044 93h1M1044 95h1M1045 93h1M1046 92h1M1047 91h1M1047 92h1M1047 93h1M1048 92h1M1048 93h1M1048 93h1M1048 93h1M1049 90h1M1049 92h1M1049 93h1M1049 93h1M1049 94h1M1050 92h1M1050 92h1M1050 93h1M1051 92h1M1051 92h1M1051 93h1M1051 94h1M1052 91h1M1052 91h1M1052 92h1M1052 93h1M1052 93h1M1053 91h1M1053 91h1M1053 92h1M1053 94h1M1054 90h1M1054 91h1M1054 91h1M1054 92h1M1054 92h1M1055 89h1M1055 90h1M1055 91h1M1055 91h1M1055 92h1M1055 93h1M1056 89h1M1056 92h1M1056 93h1M1058 88h1M1058 89h1M1058 90h1M1058 90h1M1058 90h1M1058 91h1M1059 89h1M1059 90h1M1059 91h1M1060 88h1M1060 89h1M1060 89h1M1060 90h1M1060 90h1M1060 90h1M1060 91h1M1060 91h1M1061 89h1M1061 89h1M1062 87h1M1062 87h1M1062 88h1M1063 88h1M1063 88h1M1063 88h1M1064 84h1M1064 86h1M1064 86h1M1064 88h1M1065 86h1M1065 86h1M1066 84h1M1066 85h1M1066 86h1M1066 87h1M1067 85h1M1067 86h1M1068 84h1M1068 85h1M1068 85h1M1068 86h1M1069 82h1M1069 82h1M1069 83h1M1069 84h1M1070 81h1M1070 81h1M1070 82h1M1070 83h1M1070 85h1M1070 85h1M1071 76h1M1071 79h1M1071 81h1M1071 83h1M1072 81h1M1073 80h1M1073 81h1M1074 77h1M1074 79h1M1074 79h1M1075 76h1M1075 76h1M1075 77h1M1075 77h1M1075 80h1M1076 73h1M1076 74h1M1076 75h1M1076 76h1M1076 76h1M1076 76h1M1076 77h1M1076 77h1M1076 77h1M1076 78h1M1076 78h1M1077 72h1M1077 74h1M1077 76h1M1078 71h1M1078 75h1M1079 71h1M1079 72h1M1079 72h1M1079 74h1M1079 76h1M1080 69h1M1080 69h1M1080 71h1M1080 71h1M1080 72h1M1080 72h1M1080 72h1M1080 73h1M1080 73h1M1080 75h1M1081 69h1M1081 71h1M1081 71h1M1081 72h1M1082 67h1M1082 67h1M1082 68h1M1082 70h1M1082 71h1M1082 72h1M1083 65h1M1083 67h1M1083 68h1M1083 68h1M1083 69h1M1083 69h1M1083 70h1M1083 71h1M1084 62h1M1084 66h1M1084 67h1M1085 68h1M1086 62h1M1086 63h1M1086 65h1M1087 61h1M1087 61h1M1087 62h1M1087 64h1M1088 60h1M1088 61h1M1088 64h1M1089 61h1M1089 63h1M1089 64h1M1090 55h1M1090 58h1M1090 60h1M1090 62h1M1090 63h1M1091 56h1M1091 57h1M1091 58h1M1091 58h1M1091 58h1M1092 56h1M1092 57h1M1092 57h1M1092 57h1M1092 58h1M1093 55h1M1093 56h1M1094 52h1M1094 54h1M1094 55h1M1095 54h1M1095 55h1M1095 57h1M1096 49h1M1096 49h1M1096 51h1M1096 52h1M1096 53h1M1096 53h1M1096 54h1M1097 48h1M1097 49h1M1097 51h1M1097 52h1M1098 49h1M1098 50h1M1098 51h1M1098 53h1M1099 48h1M1099 49h1M1099 49h1M1099 50h1M1099 52h1M1100 46h1M1100 46h1M1100 46h1M1100 47h1M1100 47h1M1100 47h1M1100 48h1M1101 44h1M1101 45h1M1101 45h1M1103 41h1M1103 41h1M1103 42h1M1103 42h1M1103 42h1M1103 46h1M1104 40h1M1104 42h1M1104 42h1M1104 43h1M1104 44h1M1105 41h1M1105 42h1M1105 42h1M1106 37h1M1106 39h1M1107 36h1M1107 37h1M1107 37h1M1107 38h1M1108 35h1M1108 35h1M1108 36h1M1108 38h1M1108 38h1M1108 38h1M1109 34h1M1109 35h1M1109 37h1M1109 37h1M1110 33h1M1110 34h1M1110 37h1M1111 31h1M1111 31h1M1111 32h1M1112 30h1M1112 30h1M1112 31h1M1112 33h1M1112 34h1M1112 34h1M1112 34h1M1113 30h1M1114 31h1M1114 32h1M1114 33h1M1114 34h1M1115 27h1M1115 28h1M1115 28h1M1115 29h1M1115 30h1M1115 31h1M1115 31h1M1116 25h1M1116 26h1M1116 27h1M1116 29h1M1117 24h1M1117 26h1M1117 26h1M1117 27h1M1118 27h1M1118 27h1M1118 29h1M1119 24h1M1119 24h1M1119 24h1M1119 24h1M1119 25h1M1119 25h1M1119 25h1M1119 26h1M1119 27h1M1120 23h1M1120 23h1M1120 25h1M1120 25h1M1120 26h1M1120 27h1M1121 20h1M1121 24h1M1121 26h1M1122 21h1M1122 21h1M1122 23h1M1123 22h1M1124 20h1M1124 20h1M1125 20h1M1125 21h1M1125 22h1M1126 18h1M1126 19h1M1127 18h1M1127 19h1M1127 19h1M1127 20h1M1127 21h1M1128 16h1M1128 16h1M1128 19h1M1128 20h1M1128 20h1M1129 17h1M1129 17h1M1129 19h1M1129 20h1M1129 22h1M1130 16h1M1130 17h1M1130 17h1M1130 18h1M1130 19h1M1130 20h1M1131 17h1M1131 17h1M1132 15h1M1132 16h1M1132 18h1M1133 17h1M1133 17h1M1134 13h1M1134 15h1M1134 15h1M1134 16h1M1134 16h1M1134 17h1M1134 18h1M1135 15h1M1135 15h1M1135 16h1M1135 16h1M1137 13h1M1137 14h1M1137 14h1M1137 14h1M1137 16h1M1137 17h1M1137 17h1M1137 17h1M1138 14h1M1138 14h1M1138 16h1M1139 14h1M1139 14h1M1139 15h1M1139 15h1M1139 15h1M1139 15h1M1139 15h1M1139 16h1M1140 13h1M1140 13h1M1141 13h1M1141 15h1M1141 15h1M1142 15h1M1143 13h1M1143 13h1M1143 14h1M1143 15h1M1144 14h1M1145 13h1M1145 14h1M1146 12h1M1146 13h1M1146 13h1M1146 14h1M1147 13h1M1147 13h1M1147 14h1M1147 16h1M1148 13h1M1149 13h1M1149 13h1M1149 13h1M1149 14h1M1152 14h1M1152 15h1M1152 16h1M1153 13h1M1153 14h1M1153 15h1M1153 16h1M1154 13h1M1154 14h1M1154 15h1M1154 16h1M1155 12h1M1155 13h1M1156 16h1M1156 16h1M1156 16h1M1157 15h1M1157 15h1M1157 16h1M1157 16h1M1157 17h1M1157 17h1M1158 15h1M1158 17h1M1159 16h1M1159 16h1M1159 16h1M1159 16h1M1159 17h1M1159 18h1M1159 18h1M1160 17h1M1160 17h1M1160 18h1M1160 19h1M1161 18h1M1161 19h1M1161 19h1M1161 21h1M1162 18h1M1162 19h1M1162 21h1M1162 21h1M1163 17h1M1163 18h1M1163 18h1M1163 19h1M1163 19h1M1163 20h1M1163 21h1M1164 19h1M1164 22h1M1165 18h1M1165 21h1M1165 23h1M1165 24h1M1166 21h1M1166 23h1M1166 23h1M1167 20h1M1167 22h1M1167 22h1M1167 23h1M1167 24h1M1167 25h1M1168 27h1M1169 24h1M1169 26h1M1170 23h1M1170 24h1M1170 25h1M1170 28h1M1171 27h1M1172 27h1M1172 28h1M1172 28h1M1172 28h1M1172 29h1M1172 29h1M1173 25h1M1173 29h1M1173 29h1M1173 30h1M1174 29h1M1174 31h1M1174 32h1M1175 28h1M1175 31h1M1175 33h1M1176 31h1M1176 34h1M1177 31h1M1177 32h1M1177 32h1M1177 34h1M1177 34h1M1177 37h1M1178 34h1M1178 35h1M1178 36h1M1179 34h1M1179 34h1M1179 36h1M1179 37h1M1179 37h1M1179 37h1M1179 38h1M1179 39h1M1180 39h1M1180 39h1M1180 39h1M1180 40h1M1180 40h1M1180 41h1M1180 42h1M1181 38h1M1181 40h1M1181 40h1M1181 42h1M1181 43h1M1182 39h1M1182 40h1M1182 42h1M1182 43h1M1182 43h1M1182 44h1M1183 44h1M1184 44h1M1184 44h1M1184 44h1M1184 46h1M1184 48h1M1185 45h1M1185 46h1M1185 46h1M1185 46h1M1185 48h1M1185 48h1M1185 48h1M1185 49h1M1185 49h1M1185 49h1M1185 49h1M1185 49h1M1185 50h1M1185 51h1M1186 46h1M1186 47h1M1186 49h1M1186 49h1M1186 49h1M1186 50h1M1186 50h1M1186 51h1M1186 54h1M1186 54h1M1187 44h1M1187 47h1M1187 50h1M1187 50h1M1187 50h1M1187 51h1M1187 54h1M1188 51h1M1188 51h1M1188 51h1M1188 52h1M1188 54h1M1189 50h1M1189 52h1M1189 56h1M1189 57h1M1190 53h1M1190 57h1M1190 57h1M1190 57h1M1191 55h1M1191 56h1M1191 56h1M1191 57h1M1191 57h1M1191 58h1M1191 59h1M1191 59h1M1191 60h1M1191 62h1M1192 56h1M1192 59h1M1192 61h1M1193 59h1M1193 60h1M1193 61h1M1193 62h1M1193 64h1M1194 61h1M1194 61h1M1194 63h1M1194 64h1M1194 66h1M1194 66h1M1195 64h1M1195 64h1M1195 64h1M1195 64h1M1195 64h1M1195 67h1M1195 68h1M1195 70h1M1196 60h1M1196 64h1M1196 64h1M1196 66h1M1196 66h1M1196 67h1M1196 68h1M1197 64h1M1197 66h1M1197 66h1M1197 68h1M1197 69h1M1197 69h1M1197 70h1M1198 67h1M1198 68h1M1198 68h1M1198 68h1M1198 70h1M1198 71h1M1198 71h1M1198 72h1M1198 72h1M1198 74h1M1199 71h1M1199 73h1M1199 73h1M1199 75h1M1200 71h1M1200 72h1M1200 73h1M1200 74h1M1200 74h1M1201 68h1M1201 70h1M1201 72h1M1201 73h1M1201 73h1M1201 75h1M1201 76h1M1201 76h1M1201 77h1M1201 78h1M1202 75h1M1202 76h1M1202 76h1M1202 77h1M1202 78h1M1202 78h1M1202 79h1M1202 79h1M1202 79h1M1202 80h1M1202 81h1M1203 77h1M1203 78h1M1203 79h1M1203 80h1M1203 80h1M1203 80h1M1203 80h1M1203 83h1M1203 85h1M1204 77h1M1204 79h1M1204 81h1M1204 82h1M1204 84h1M1205 79h1M1205 79h1M1205 80h1M1205 80h1M1205 81h1M1205 82h1M1205 83h1M1205 83h1M1206 84h1M1206 84h1M1206 84h1M1206 87h1M1206 87h1M1207 84h1M1207 86h1M1207 87h1M1207 87h1M1207 87h1M1207 88h1M1207 88h1M1207 89h1M1207 89h1M1208 86h1M1208 87h1M1208 87h1M1208 89h1M1208 91h1M1209 87h1M1209 88h1M1209 88h1M1209 90h1M1209 90h1M1209 91h1M1209 94h1M1210 90h1M1210 91h1M1210 91h1M1210 93h1M1210 93h1M1210 95h1M1210 97h1M1211 92h1M1211 92h1M1211 93h1M1211 93h1M1211 93h1M1211 94h1M1211 96h1M1211 96h1M1212 100h1M1212 89h1M1212 91h1M1212 91h1M1212 94h1M1212 95h1M1212 95h1M1212 96h1M1212 96h1M1212 96h1M1213 95h1M1213 96h1M1213 96h1M1213 96h1M1213 98h1M1213 99h1M1213 99h1M1214 100h1M1214 100h1M1214 101h1M1214 94h1M1214 97h1M1214 99h1M1215 100h1M1215 100h1M1215 101h1M1215 103h1M1215 97h1M1215 97h1M1215 98h1M1215 99h1M1216 102h1M1216 104h1M1216 99h1M1216 99h1M1216 99h1M1217 101h1M1217 102h1M1217 104h1M1217 99h1M1218 103h1M1218 103h1M1218 105h1M1219 102h1M1219 103h1M1219 103h1M1219 103h1M1219 104h1M1219 104h1M1219 107h1M1219 98h1M1219 99h1M1220 100h1M1220 103h1M1220 104h1M1220 105h1M1220 105h1M1220 108h1M1221 103h1M1221 104h1M1221 105h1M1221 106h1M1222 104h1M1222 105h1M1222 106h1M1222 107h1M1222 108h1M1223 101h1M1223 108h1M1224 103h1M1224 105h1M1224 107h1M1224 108h1M1224 108h1M1225 104h1M1225 107h1M1225 107h1M1226 106h1M1226 108h1M1226 109h1M1226 109h1M1226 109h1M1227 106h1M1227 106h1M1227 108h1M1228 106h1M1228 107h1M1228 109h1M1228 110h1M1229 104h1M1229 108h1M1229 109h1M1229 111h1M1230 106h1M1230 106h1M1230 107h1M1230 108h1M1231 107h1M1231 110h1M1232 105h1M1232 106h1M1232 107h1M1232 107h1M1232 108h1M1232 109h1M1232 109h1M1232 110h1M1233 104h1M1233 105h1M1233 106h1M1233 106h1M1234 104h1M1234 104h1M1234 104h1M1234 104h1M1235 104h1M1235 104h1M1235 105h1M1235 105h1M1235 105h1M1235 105h1M1235 105h1M1235 107h1M1235 108h1M1236 100h1M1236 103h1M1236 105h1M1236 106h1M1237 102h1M1237 105h1M1238 103h1M1238 99h1M1239 100h1M1239 100h1M1239 101h1M1239 101h1M1239 104h1M1240 101h1M1240 98h1M1241 101h1M1242 102h1M1242 97h1M1242 98h1M1242 98h1M1242 99h1M1243 100h1M1243 100h1M1243 101h1M1243 102h1M1243 98h1M1243 99h1M1244 92h1M1244 93h1M1244 94h1M1244 96h1M1245 96h1M1245 97h1M1246 91h1M1246 93h1M1246 95h1M1246 95h1M1246 95h1M1246 99h1M1247 89h1M1247 92h1M1247 92h1M1247 94h1M1247 94h1M1247 96h1M1247 96h1M1248 88h1M1248 89h1M1248 93h1M1249 86h1M1249 89h1M1249 90h1M1249 91h1M1249 94h1M1249 95h1M1249 97h1M1250 85h1M1250 87h1M1250 88h1M1250 88h1M1250 91h1M1250 92h1M1251 87h1M1251 87h1M1251 90h1M1251 90h1M1252 81h1M1252 87h1M1252 87h1M1253 82h1M1253 84h1M1253 86h1M1254 79h1M1254 81h1M1254 86h1M1254 86h1M1254 88h1M1255 79h1M1255 79h1M1255 86h1M1255 86h1M1255 90h1M1256 76h1M1256 78h1M1256 78h1M1256 79h1M1256 86h1M1257 76h1M1257 77h1M1257 79h1M1257 79h1M1257 81h1M1257 83h1M1257 85h1M1258 76h1M1258 77h1M1258 77h1M1258 78h1M1258 79h1M1258 80h1M1258 81h1M1259 74h1M1259 75h1M1259 75h1M1259 75h1M1259 77h1M1259 77h1M1259 77h1M1259 78h1M1259 79h1M1259 80h1M1260 72h1M1260 73h1M1260 75h1M1260 79h1M1260 79h1M1260 79h1M1260 81h1M1261 71h1M1261 72h1M1261 72h1M1261 74h1M1261 74h1M1261 75h1M1261 77h1M1261 78h1M1262 67h1M1262 70h1M1262 71h1M1262 71h1M1262 73h1M1262 73h1M1262 79h1M1263 67h1M1263 69h1M1263 70h1M1263 70h1M1263 70h1M1263 71h1M1263 71h1M1263 71h1M1263 71h1M1263 72h1M1263 73h1M1263 79h1M1264 65h1M1264 67h1M1264 67h1M1264 68h1M1264 68h1M1264 68h1M1264 72h1M1264 72h1M1264 73h1M1265 67h1M1265 67h1M1265 69h1M1266 65h1M1266 68h1M1266 69h1M1266 70h1M1266 70h1M1267 65h1M1267 65h1M1268 64h1M1268 64h1M1268 65h1M1268 67h1M1268 68h1M1268 69h1M1269 66h1M1269 66h1M1269 67h1M1269 71h1M1270 64h1M1270 65h1M1272 58h1M1272 61h1M1272 62h1M1272 63h1M1273 58h1M1273 60h1M1273 60h1M1273 60h1M1273 62h1M1273 62h1M1274 56h1M1274 58h1M1274 58h1M1274 58h1M1274 59h1M1274 59h1M1274 61h1M1275 56h1M1275 57h1M1275 57h1M1275 58h1M1275 59h1M1275 60h1M1275 60h1M1275 64h1M1276 56h1M1276 56h1M1276 56h1M1276 56h1M1276 58h1M1277 54h1M1277 58h1M1278 54h1M1278 55h1M1278 56h1M1278 56h1M1279 53h1M1279 53h1M1279 54h1M1279 55h1M1279 55h1M1280 53h1M1280 53h1M1280 53h1M1280 55h1M1280 55h1M1281 54h1M1281 55h1M1281 55h1M1281 56h1M1282 50h1M1282 52h1M1282 52h1M1282 54h1M1282 56h1M1283 50h1M1283 51h1M1283 52h1M1284 46h1M1284 47h1M1284 49h1M1284 50h1M1284 50h1M1284 51h1M1284 52h1M1285 49h1M1285 51h1M1285 51h1M1285 52h1M1286 47h1M1286 48h1M1286 50h1M1287 45h1M1287 46h1M1287 46h1M1287 48h1M1287 48h1M1287 49h1M1287 51h1M1288 46h1M1288 47h1M1288 48h1M1288 48h1M1288 49h1M1288 49h1M1289 44h1M1289 47h1M1289 48h1M1289 48h1M1290 44h1M1290 45h1M1290 46h1M1290 47h1M1291 42h1M1291 44h1M1291 44h1M1291 45h1M1291 45h1M1292 39h1M1292 41h1M1292 42h1M1292 43h1M1292 43h1M1293 43h1M1293 43h1M1293 43h1M1293 43h1M1293 44h1M1293 44h1M1294 42h1M1294 43h1M1294 45h1M1294 47h1M1295 38h1M1295 43h1M1296 38h1M1296 41h1M1296 41h1M1296 42h1M1297 36h1M1297 39h1M1297 39h1M1297 40h1M1297 41h1M1297 41h1M1298 37h1M1298 38h1M1298 38h1M1298 39h1M1298 39h1M1298 39h1M1298 40h1M1298 42h1M1299 35h1M1299 38h1M1299 38h1M1299 39h1M1299 39h1M1299 39h1M1300 36h1M1300 39h1M1300 39h1M1300 41h1M1301 36h1M1301 37h1M1301 38h1M1301 38h1M1301 40h1M1301 40h1M1302 37h1M1302 37h1M1302 37h1M1302 37h1M1302 37h1M1303 34h1M1303 35h1M1303 35h1M1303 36h1M1303 37h1M1303 37h1M1304 33h1M1304 34h1M1304 35h1M1304 36h1M1304 37h1M909 75h1M909 75h1M909 76h1M909 77h1M910 75h1M910 76h1M912 73h1M912 74h1M913 71h1M913 71h1M914 71h1M914 71h1M914 72h1M915 70h1M915 72h1M916 70h1M916 71h1M917 69h1M918 66h1M918 67h1M918 68h1M918 70h1M919 65h1M920 64h1M920 65h1M923 62h1M923 62h1M924 61h1M924 62h1M924 62h1M925 59h1M925 61h1M925 62h1M926 62h1M927 61h1M927 63h1M929 58h1M929 59h1M931 57h1M931 59h1M933 56h1M933 57h1M935 56h1M935 56h1M937 54h1M938 54h1M941 55h1M943 51h1M944 52h1M944 52h1M946 53h1M947 51h1M949 52h1M949 53h1M950 52h1M951 49h1M952 49h1M953 50h1M953 51h1M953 52h1M955 50h1M956 53h1M958 50h1M958 52h1M959 52h1M960 52h1M960 53h1M961 51h1M962 52h1M962 52h1M963 52h1M963 52h1M963 54h1M965 53h1M965 53h1M965 54h1M965 54h1M966 52h1M967 53h1M968 55h1M968 56h1M969 54h1M970 56h1M971 55h1M971 55h1M971 55h1M972 54h1M973 55h1M973 58h1M973 58h1M975 59h1M976 58h1M977 58h1M980 59h1M984 62h1M984 63h1M984 63h1M984 64h1M984 65h1M985 64h1M985 64h1M985 65h1M986 64h1M986 65h1M986 65h1M987 62h1M987 63h1M987 64h1M987 65h1M988 64h1M988 65h1M988 65h1M988 67h1M989 66h1M989 66h1M989 66h1M989 68h1M990 64h1M990 65h1M990 69h1M991 67h1M991 68h1M991 69h1M991 69h1M992 67h1M992 67h1M992 68h1M993 68h1M993 70h1M993 72h1M994 67h1M994 68h1M994 68h1M994 68h1M995 69h1M995 69h1M995 71h1M996 69h1M996 70h1M996 70h1M996 71h1M997 70h1M997 72h1M997 72h1M998 73h1M998 74h1M999 70h1M999 71h1M999 72h1M999 73h1M999 73h1" stroke="#8a3fb0" stroke-opacity="0.55" stroke-width="1" fill="none"/><path d="M1001 68h1M1001 72h1M1002 72h1M1002 79h1M1003 81h1M1004 79h1M1004 81h1M1006 73h1M1006 79h1M1006 84h1M1007 74h1M1007 79h1M1007 81h1M1008 73h1M1008 74h1M1010 79h1M1010 80h1M1010 84h1M1011 76h1M1012 71h1M1012 77h1M1012 77h1M1012 79h1M1012 81h1M1012 86h1M1013 82h1M1014 79h1M1015 79h1M1015 84h1M1016 85h1M1016 86h1M1017 93h1M1018 77h1M1019 81h1M1019 87h1M1020 81h1M1020 84h1M1021 82h1M1022 88h1M1022 90h1M1023 93h1M1023 93h1M1026 89h1M1026 90h1M1028 100h1M1028 83h1M1028 89h1M1028 93h1M1030 88h1M1031 85h1M1031 89h1M1032 90h1M1032 91h1M1032 95h1M1033 94h1M1033 94h1M1034 79h1M1034 93h1M1034 95h1M1034 97h1M1034 99h1M1035 95h1M1035 96h1M1035 96h1M1036 95h1M1037 96h1M1037 97h1M1038 94h1M1038 99h1M1038 99h1M1039 89h1M1039 99h1M1040 88h1M1040 90h1M1040 93h1M1041 100h1M1041 101h1M1041 93h1M1041 97h1M1042 101h1M1042 89h1M1042 97h1M1043 90h1M1043 99h1M1043 99h1M1044 90h1M1044 98h1M1045 100h1M1045 103h1M1046 103h1M1046 106h1M1046 107h1M1046 109h1M1046 111h1M1046 90h1M1046 93h1M1046 95h1M1046 97h1M1047 93h1M1047 97h1M1048 102h1M1048 103h1M1048 105h1M1048 95h1M1048 97h1M1049 109h1M1049 89h1M1050 100h1M1050 102h1M1050 107h1M1051 100h1M1051 104h1M1051 105h1M1051 107h1M1052 104h1M1052 97h1M1053 103h1M1053 104h1M1053 108h1M1053 86h1M1053 94h1M1053 95h1M1054 101h1M1054 108h1M1054 108h1M1054 110h1M1054 81h1M1054 92h1M1055 108h1M1055 110h1M1055 98h1M1057 106h1M1057 90h1M1057 92h1M1057 93h1M1058 108h1M1058 86h1M1058 87h1M1059 106h1M1059 106h1M1059 108h1M1059 111h1M1059 115h1M1060 93h1M1061 105h1M1061 110h1M1061 111h1M1061 115h1M1061 116h1M1062 113h1M1062 83h1M1063 125h1M1063 83h1M1063 90h1M1064 112h1M1064 117h1M1064 118h1M1064 88h1M1064 91h1M1065 115h1M1065 122h1M1066 116h1M1066 118h1M1066 81h1M1066 83h1M1066 93h1M1067 115h1M1068 108h1M1068 118h1M1068 119h1M1068 123h1M1068 86h1M1069 122h1M1069 90h1M1070 119h1M1070 120h1M1070 67h1M1070 75h1M1070 84h1M1070 84h1M1070 87h1M1071 127h1M1071 80h1M1071 81h1M1071 92h1M1072 120h1M1072 123h1M1072 125h1M1072 126h1M1072 78h1M1072 78h1M1072 81h1M1072 89h1M1073 123h1M1073 125h1M1074 120h1M1074 121h1M1074 87h1M1075 119h1M1075 124h1M1075 75h1M1076 128h1M1076 64h1M1076 73h1M1076 74h1M1076 76h1M1077 117h1M1077 128h1M1077 130h1M1077 71h1M1077 86h1M1078 118h1M1078 71h1M1078 72h1M1078 77h1M1079 118h1M1079 125h1M1079 131h1M1079 75h1M1079 75h1M1080 117h1M1080 118h1M1080 129h1M1080 66h1M1080 70h1M1080 76h1M1080 77h1M1081 126h1M1081 68h1M1081 68h1M1081 76h1M1081 77h1M1081 79h1M1082 123h1M1082 126h1M1082 127h1M1082 130h1M1082 63h1M1082 72h1M1083 60h1M1083 66h1M1083 66h1M1084 121h1M1084 124h1M1084 63h1M1085 125h1M1085 131h1M1085 51h1M1085 61h1M1085 65h1M1086 64h1M1086 64h1M1086 71h1M1087 126h1M1087 126h1M1087 63h1M1088 130h1M1088 131h1M1088 58h1M1088 70h1M1089 126h1M1089 129h1M1089 130h1M1089 131h1M1089 55h1M1089 61h1M1089 65h1M1090 44h1M1090 61h1M1091 43h1M1091 51h1M1092 125h1M1092 48h1M1092 59h1M1093 128h1M1093 130h1M1093 42h1M1093 50h1M1093 55h1M1093 57h1M1093 59h1M1093 59h1M1093 60h1M1093 60h1M1094 123h1M1094 131h1M1094 52h1M1094 61h1M1094 61h1M1094 61h1M1094 61h1M1094 61h1M1094 62h1M1094 63h1M1095 50h1M1095 52h1M1095 56h1M1095 58h1M1095 59h1M1095 61h1M1095 62h1M1095 64h1M1096 47h1M1096 49h1M1096 55h1M1096 58h1M1096 60h1M1096 60h1M1096 62h1M1096 62h1M1096 62h1M1097 45h1M1097 50h1M1097 51h1M1097 53h1M1097 54h1M1097 54h1M1097 58h1M1097 60h1M1097 62h1M1098 48h1M1098 50h1M1098 54h1M1098 56h1M1098 56h1M1098 57h1M1098 59h1M1098 59h1M1098 60h1M1098 60h1M1099 35h1M1099 40h1M1099 49h1M1099 49h1M1099 51h1M1099 52h1M1099 56h1M1099 58h1M1099 58h1M1099 59h1M1099 61h1M1100 44h1M1100 46h1M1100 48h1M1100 48h1M1100 55h1M1100 56h1M1100 58h1M1101 43h1M1101 47h1M1101 50h1M1101 51h1M1101 52h1M1101 53h1M1101 53h1M1101 53h1M1101 54h1M1101 55h1M1101 57h1M1101 57h1M1101 58h1M1102 32h1M1102 36h1M1102 45h1M1102 50h1M1102 50h1M1102 51h1M1102 52h1M1102 52h1M1102 52h1M1102 54h1M1102 54h1M1102 54h1M1102 55h1M1102 57h1M1102 57h1M1102 58h1M1102 60h1M1103 43h1M1103 47h1M1103 49h1M1103 52h1M1103 54h1M1103 58h1M1104 39h1M1104 44h1M1104 49h1M1104 52h1M1104 53h1M1104 55h1M1105 35h1M1105 38h1M1105 39h1M1105 39h1M1105 42h1M1105 43h1M1105 44h1M1105 45h1M1105 46h1M1105 47h1M1105 47h1M1105 47h1M1105 49h1M1105 49h1M1105 49h1M1105 53h1M1105 61h1M1106 26h1M1106 39h1M1106 41h1M1106 45h1M1106 45h1M1106 49h1M1106 50h1M1106 51h1M1106 51h1M1106 52h1M1106 56h1M1107 31h1M1107 35h1M1107 36h1M1107 38h1M1107 38h1M1107 39h1M1107 42h1M1107 42h1M1107 42h1M1107 44h1M1107 44h1M1107 44h1M1107 47h1M1107 49h1M1107 50h1M1107 50h1M1107 51h1M1107 53h1M1107 55h1M1108 38h1M1108 38h1M1108 42h1M1108 44h1M1108 45h1M1108 46h1M1108 46h1M1108 48h1M1108 52h1M1108 53h1M1108 54h1M1109 34h1M1109 36h1M1109 38h1M1109 42h1M1109 45h1M1109 45h1M1109 48h1M1109 51h1M1109 54h1M1109 57h1M1110 28h1M1110 37h1M1110 41h1M1110 41h1M1110 42h1M1110 43h1M1110 44h1M1110 46h1M1110 46h1M1110 47h1M1110 47h1M1110 51h1M1111 30h1M1111 31h1M1111 36h1M1111 38h1M1111 48h1M1111 48h1M1112 33h1M1112 34h1M1112 34h1M1112 35h1M1112 37h1M1112 41h1M1112 45h1M1112 46h1M1112 46h1M1112 47h1M1112 47h1M1112 50h1M1113 25h1M1113 29h1M1113 32h1M1113 33h1M1113 35h1M1113 36h1M1113 37h1M1113 41h1M1113 50h1M1114 31h1M1114 36h1M1114 40h1M1114 51h1M1115 27h1M1115 28h1M1115 34h1M1115 34h1M1115 35h1M1115 37h1M1115 37h1M1115 38h1M1115 38h1M1115 38h1M1115 42h1M1115 46h1M1116 31h1M1116 33h1M1116 33h1M1116 34h1M1116 40h1M1116 44h1M1116 44h1M1116 47h1M1116 49h1M1117 21h1M1117 27h1M1117 29h1M1117 35h1M1117 35h1M1117 39h1M1117 45h1M1118 29h1M1118 33h1M1118 33h1M1118 35h1M1118 37h1M1119 25h1M1119 34h1M1119 37h1M1119 38h1M1120 15h1M1120 26h1M1120 26h1M1120 27h1M1120 32h1M1120 34h1M1120 34h1M1120 35h1M1120 38h1M1120 39h1M1120 39h1M1120 40h1M1120 41h1M1120 41h1M1120 41h1M1120 50h1M1121 22h1M1121 27h1M1121 28h1M1121 30h1M1121 34h1M1121 36h1M1121 39h1M1121 40h1M1121 46h1M1122 17h1M1122 27h1M1122 28h1M1122 30h1M1122 37h1M1122 41h1M1122 41h1M1122 43h1M1123 26h1M1123 29h1M1123 32h1M1123 39h1M1123 46h1M1124 14h1M1124 23h1M1124 26h1M1124 30h1M1124 30h1M1124 30h1M1124 31h1M1124 33h1M1124 38h1M1124 38h1M1125 17h1M1125 21h1M1125 25h1M1125 26h1M1125 28h1M1125 31h1M1125 33h1M1125 34h1M1125 34h1M1125 34h1M1125 35h1M1125 41h1M1126 21h1M1126 23h1M1126 36h1M1126 40h1M1127 20h1M1127 22h1M1127 28h1M1127 42h1M1128 18h1M1128 22h1M1128 24h1M1128 25h1M1128 27h1M1128 28h1M1129 19h1M1129 28h1M1129 33h1M1130 21h1M1130 22h1M1130 22h1M1130 23h1M1130 24h1M1130 25h1M1130 32h1M1131 15h1M1131 18h1M1131 22h1M1131 22h1M1131 24h1M1131 26h1M1131 30h1M1131 30h1M1131 40h1M1132 16h1M1132 16h1M1132 17h1M1132 29h1M1132 29h1M1132 30h1M1132 31h1M1132 33h1M1133 17h1M1133 22h1M1133 24h1M1133 25h1M1133 27h1M1133 28h1M1133 28h1M1133 31h1M1133 33h1M1133 33h1M1134 18h1M1134 22h1M1134 27h1M1134 27h1M1134 36h1M1134 39h1M1135 21h1M1135 22h1M1135 23h1M1135 24h1M1135 28h1M1135 29h1M1135 30h1M1136 16h1M1136 19h1M1136 20h1M1136 22h1M1136 25h1M1136 27h1M1136 29h1M1137 18h1M1137 21h1M1137 25h1M1137 26h1M1137 26h1M1137 27h1M1137 28h1M1138 16h1M1138 17h1M1138 18h1M1138 21h1M1138 23h1M1138 25h1M1138 27h1M1138 29h1M1138 29h1M1138 30h1M1139 18h1M1139 19h1M1139 21h1M1139 23h1M1139 23h1M1139 23h1M1139 26h1M1139 28h1M1139 29h1M1139 32h1M1140 10h1M1140 23h1M1140 24h1M1140 26h1M1140 30h1M1140 30h1M1140 33h1M1141 21h1M1141 21h1M1141 21h1M1141 24h1M1141 24h1M1141 25h1M1141 26h1M1141 34h1M1142 19h1M1142 20h1M1142 21h1M1142 23h1M1142 23h1M1142 25h1M1142 26h1M1142 9h1M1143 14h1M1143 20h1M1143 21h1M1143 22h1M1143 24h1M1143 29h1M1143 30h1M1143 30h1M1144 16h1M1144 24h1M1144 28h1M1144 30h1M1144 6h1M1145 19h1M1145 29h1M1145 31h1M1145 32h1M1146 14h1M1146 17h1M1146 18h1M1146 19h1M1146 20h1M1146 20h1M1146 24h1M1146 24h1M1146 28h1M1146 29h1M1147 17h1M1147 24h1M1147 25h1M1148 11h1M1148 16h1M1148 18h1M1148 20h1M1148 20h1M1148 21h1M1148 21h1M1148 24h1M1148 27h1M1148 7h1M1149 10h1M1149 12h1M1149 21h1M1149 22h1M1149 22h1M1149 24h1M1149 27h1M1149 28h1M1149 29h1M1150 13h1M1150 17h1M1150 18h1M1150 20h1M1150 23h1M1150 24h1M1150 24h1M1151 12h1M1151 23h1M1151 24h1M1151 24h1M1151 25h1M1151 27h1M1151 28h1M1151 29h1M1151 31h1M1151 31h1M1152 18h1M1152 18h1M1152 25h1M1152 26h1M1152 27h1M1153 10h1M1153 24h1M1153 28h1M1154 12h1M1154 17h1M1154 22h1M1154 22h1M1154 23h1M1154 25h1M1154 32h1M1154 8h1M1155 18h1M1155 18h1M1155 19h1M1155 24h1M1155 26h1M1155 26h1M1155 31h1M1156 11h1M1156 19h1M1156 19h1M1156 23h1M1156 25h1M1156 25h1M1156 26h1M1156 26h1M1156 29h1M1156 30h1M1156 8h1M1157 15h1M1157 17h1M1157 21h1M1157 22h1M1157 24h1M1157 25h1M1157 25h1M1157 27h1M1157 27h1M1157 31h1M1157 33h1M1158 18h1M1158 19h1M1158 20h1M1158 23h1M1158 25h1M1158 32h1M1158 32h1M1158 33h1M1158 33h1M1159 22h1M1159 41h1M1160 12h1M1160 15h1M1160 16h1M1160 21h1M1160 24h1M1160 25h1M1160 25h1M1160 25h1M1160 28h1M1160 30h1M1160 32h1M1160 34h1M1161 21h1M1161 22h1M1161 24h1M1161 26h1M1162 16h1M1162 21h1M1162 24h1M1162 26h1M1162 27h1M1162 35h1M1162 36h1M1162 42h1M1163 19h1M1163 19h1M1163 21h1M1163 25h1M1163 27h1M1163 28h1M1163 28h1M1163 28h1M1163 28h1M1163 29h1M1163 31h1M1164 22h1M1164 33h1M1164 36h1M1165 18h1M1165 19h1M1165 21h1M1165 27h1M1165 30h1M1165 31h1M1165 37h1M1165 38h1M1166 19h1M1166 20h1M1166 29h1M1166 30h1M1166 30h1M1166 38h1M1166 41h1M1166 45h1M1167 28h1M1167 30h1M1167 35h1M1167 36h1M1167 37h1M1167 42h1M1168 22h1M1168 32h1M1168 33h1M1168 33h1M1168 39h1M1168 49h1M1169 18h1M1169 22h1M1169 29h1M1169 35h1M1169 39h1M1169 41h1M1169 41h1M1169 41h1M1169 43h1M1169 47h1M1170 21h1M1170 22h1M1170 28h1M1170 32h1M1170 34h1M1170 39h1M1170 40h1M1170 40h1M1170 40h1M1170 41h1M1171 20h1M1171 26h1M1171 28h1M1171 28h1M1171 34h1M1171 37h1M1171 41h1M1171 43h1M1171 50h1M1171 50h1M1172 27h1M1172 33h1M1172 40h1M1172 40h1M1172 41h1M1172 44h1M1172 44h1M1172 44h1M1172 45h1M1172 50h1M1173 29h1M1173 34h1M1173 36h1M1173 36h1M1173 39h1M1173 40h1M1173 41h1M1173 41h1M1173 42h1M1173 50h1M1174 21h1M1174 24h1M1174 30h1M1174 31h1M1174 32h1M1174 34h1M1174 39h1M1174 39h1M1174 39h1M1174 40h1M1174 43h1M1174 44h1M1174 45h1M1174 46h1M1174 46h1M1174 51h1M1174 52h1M1174 52h1M1175 20h1M1175 24h1M1175 27h1M1175 34h1M1175 37h1M1175 40h1M1175 41h1M1175 42h1M1175 42h1M1175 44h1M1175 45h1M1175 49h1M1176 30h1M1176 31h1M1176 37h1M1176 38h1M1176 38h1M1176 42h1M1176 44h1M1176 44h1M1176 45h1M1176 47h1M1176 49h1M1176 50h1M1176 58h1M1177 31h1M1177 42h1M1177 42h1M1177 44h1M1177 46h1M1177 46h1M1177 48h1M1178 22h1M1178 37h1M1178 44h1M1178 45h1M1178 46h1M1178 50h1M1179 24h1M1179 38h1M1179 41h1M1179 46h1M1179 46h1M1179 48h1M1180 34h1M1180 38h1M1180 46h1M1180 46h1M1180 48h1M1181 45h1M1181 48h1M1183 29h1M1183 39h1M1183 42h1M1183 46h1M1183 46h1M1183 53h1M1184 48h1M1185 57h1M1186 54h1M1186 58h1M1187 41h1M1187 56h1M1188 43h1M1188 43h1M1188 52h1M1188 56h1M1188 60h1M1189 42h1M1189 61h1M1189 69h1M1189 71h1M1190 30h1M1190 59h1M1190 69h1M1191 61h1M1192 60h1M1192 63h1M1192 73h1M1193 45h1M1193 54h1M1193 61h1M1193 62h1M1194 40h1M1194 52h1M1194 61h1M1194 75h1M1195 61h1M1195 64h1M1195 64h1M1195 66h1M1195 67h1M1196 61h1M1197 58h1M1197 60h1M1197 66h1M1197 74h1M1197 79h1M1198 61h1M1198 71h1M1198 72h1M1198 81h1M1199 59h1M1199 67h1M1199 79h1M1199 89h1M1200 75h1M1200 79h1M1200 80h1M1200 81h1M1200 93h1M1201 72h1M1201 73h1M1201 80h1M1202 72h1M1202 76h1M1203 64h1M1203 67h1M1203 70h1M1203 77h1M1203 88h1M1204 78h1M1204 80h1M1205 71h1M1205 76h1M1205 76h1M1205 80h1M1205 86h1M1206 66h1M1206 80h1M1206 86h1M1207 87h1M1207 92h1M1207 92h1M1208 78h1M1208 80h1M1208 91h1M1208 92h1M1209 104h1M1209 94h1M1209 96h1M1210 97h1M1210 97h1M1211 87h1M1211 99h1M1212 86h1M1212 90h1M1213 100h1M1213 106h1M1213 106h1M1213 88h1M1213 99h1M1215 89h1M1216 87h1M1217 96h1M1218 102h1M1218 106h1M1218 112h1M1219 95h1M1220 110h1M1221 100h1M1221 101h1M1221 107h1M1221 107h1M1222 109h1M1222 98h1M1222 99h1M1224 101h1M1224 117h1M1225 110h1M1227 100h1M1228 93h1M1229 108h1M1230 102h1M1230 106h1M1231 100h1M1231 105h1M1231 106h1M1232 104h1M1232 108h1M1233 102h1M1233 105h1M1233 96h1M1233 98h1M1234 104h1M1234 105h1M1234 117h1M1235 113h1M1238 105h1M1238 107h1M1239 107h1M1239 99h1M1240 107h1M1241 100h1M1241 104h1M1241 98h1M1242 93h1M1242 99h1M1243 93h1M1243 94h1M1243 94h1M1244 70h1M1244 98h1M1245 107h1M1246 101h1M1246 89h1M1247 76h1M1247 94h1M1248 102h1M1248 94h1M1250 102h1M1250 80h1M1250 89h1M1251 77h1M1253 81h1M1254 100h1M1254 77h1M1255 75h1M1255 77h1M1255 92h1M1256 78h1M1256 87h1M1256 94h1M1257 65h1M1257 74h1M1258 59h1M1259 67h1M1259 72h1M1259 75h1M1259 76h1M1260 60h1M1260 61h1M1260 69h1M1260 80h1M1261 80h1M1261 82h1M1262 72h1M1262 91h1M1263 62h1M1263 75h1M1263 77h1M1263 83h1M1263 84h1M1264 68h1M1264 68h1M1264 69h1M1264 75h1M1264 87h1M1265 52h1M1266 63h1M1266 64h1M1267 58h1M1268 68h1M1268 69h1M1268 69h1M1268 73h1M1269 61h1M1270 59h1M1270 68h1M1271 68h1M1273 62h1M1273 63h1M1273 68h1M1274 64h1M1275 54h1M1275 65h1M1275 66h1M1276 54h1M1276 61h1M1277 52h1M1277 55h1M1277 56h1M1277 57h1M1277 66h1M1279 58h1M1281 50h1M1281 53h1M1281 59h1M1283 53h1M1284 37h1M1284 48h1M1285 53h1M1287 46h1M1287 49h1M1288 37h1M1288 37h1M1288 42h1M1288 50h1M1288 50h1M1288 73h1M1289 47h1M1290 36h1M1290 54h1M1291 39h1M1291 40h1M1293 40h1M1293 42h1M1293 42h1M1293 52h1M1295 31h1M1295 31h1M1295 43h1M1295 43h1M1295 44h1M1296 34h1M1296 50h1M1297 40h1M1298 49h1M1299 31h1M1299 46h1M1301 37h1M1303 34h1M1303 43h1M1304 35h1M907 72h1M908 75h1M914 58h1M914 74h1M915 67h1M916 67h1M917 66h1M917 68h1M917 71h1M918 68h1M918 71h1M919 67h1M919 67h1M920 70h1M921 65h1M924 54h1M928 57h1M928 67h1M929 54h1M929 59h1M929 70h1M930 55h1M930 59h1M930 64h1M931 57h1M931 70h1M932 63h1M933 57h1M933 65h1M934 53h1M935 49h1M939 56h1M940 57h1M941 40h1M942 59h1M946 52h1M947 58h1M948 48h1M950 49h1M950 49h1M954 46h1M954 57h1M955 45h1M955 60h1M956 49h1M956 53h1M961 59h1M962 45h1M964 50h1M964 57h1M967 56h1M968 55h1M968 63h1M971 52h1M974 57h1M975 51h1M977 59h1M977 62h1M981 63h1M982 58h1M983 73h1M985 66h1M985 67h1M987 63h1M988 65h1M989 64h1M989 68h1M991 68h1M991 73h1M992 77h1M993 67h1M993 79h1M994 63h1M994 70h1M996 66h1M998 67h1M998 77h1" stroke="#8a3fb0" stroke-opacity="0.35" stroke-width="1" fill="none"/><path d="M1000 56h1M1000 62h1M1000 79h1M1001 56h1M1001 57h1M1002 58h1M1003 59h1M1004 59h1M1004 62h1M1005 54h1M1005 58h1M1005 65h1M1006 57h1M1006 63h1M1006 68h1M1007 62h1M1007 71h1M1009 64h1M1009 70h1M1010 60h1M1011 63h1M1012 71h1M1014 69h1M1014 70h1M1014 71h1M1015 86h1M1016 68h1M1016 71h1M1016 74h1M1017 69h1M1017 75h1M1019 73h1M1021 71h1M1022 70h1M1026 73h1M1026 74h1M1026 76h1M1026 97h1M1027 69h1M1027 79h1M1027 83h1M1031 100h1M1031 73h1M1031 79h1M1032 70h1M1032 73h1M1032 79h1M1033 71h1M1033 75h1M1034 76h1M1034 84h1M1034 91h1M1035 77h1M1037 81h1M1038 87h1M1039 80h1M1039 80h1M1039 81h1M1039 83h1M1040 74h1M1040 81h1M1040 82h1M1041 80h1M1041 82h1M1043 79h1M1044 79h1M1044 80h1M1056 75h1M1059 81h1M1063 73h1M1063 98h1M1070 90h1M1071 77h1M1075 69h1M1079 98h1M1083 82h1M1085 50h1M1086 70h1M1090 47h1M1093 33h1M1099 50h1M1106 34h1M1108 44h1M1109 22h1M1113 20h1M1118 15h1M1118 15h1M1123 15h1M1125 33h1M1125 36h1M1128 15h1M1128 30h1M1133 24h1M1133 9h1M1140 18h1M1143 29h1M1150 2h1M1152 17h1M1158 29h1M1163 19h1M1167 15h1M1169 39h1M1172 59h1M1174 21h1M1175 49h1M1175 52h1M1181 44h1M1185 51h1M1190 69h1M1193 56h1M1194 93h1M1195 64h1M1196 56h1M1197 19h1M1197 30h1M1199 109h1M1204 91h1M1206 73h1M1208 109h1M1208 90h1M1210 103h1M1214 64h1M1217 106h1M1228 98h1M1230 101h1M1237 85h1M1239 112h1M1243 111h1M1245 88h1M1248 113h1M1248 96h1M1249 79h1M1252 69h1M1260 84h1M1263 67h1M1270 69h1M1270 73h1M1271 63h1M1274 79h1M1278 78h1M1285 37h1M1285 52h1M1290 43h1M1291 55h1M1294 22h1M1295 25h1M1297 40h1M1299 42h1M1304 38h1M905 67h1M908 76h1M912 68h1M916 79h1M935 68h1M938 58h1M940 45h1M940 52h1M942 49h1M945 68h1M953 60h1M958 47h1M961 79h1M962 41h1M962 42h1M962 56h1M963 43h1M963 44h1M964 46h1M966 42h1M966 43h1M966 43h1M967 40h1M967 41h1M967 46h1M967 69h1M967 70h1M968 42h1M969 42h1M969 62h1M969 62h1M970 42h1M970 43h1M970 43h1M970 50h1M971 44h1M972 44h1M972 44h1M972 48h1M973 42h1M973 46h1M973 56h1M975 43h1M975 48h1M976 42h1M976 43h1M976 45h1M976 48h1M976 50h1M976 54h1M976 61h1M977 43h1M977 45h1M977 45h1M977 47h1M978 49h1M978 50h1M979 49h1M979 49h1M979 66h1M980 44h1M980 46h1M980 50h1M981 42h1M981 45h1M981 51h1M983 47h1M984 50h1M985 47h1M985 53h1M986 71h1M988 57h1M988 64h1M989 48h1M989 49h1M989 55h1M989 65h1M991 51h1M991 53h1M991 58h1M991 71h1M992 57h1M993 48h1M993 57h1M993 62h1M993 71h1M994 46h1M994 51h1M995 56h1M995 58h1M997 54h1M997 57h1M997 58h1M997 59h1M997 62h1M998 56h1M998 57h1M998 61h1M999 53h1M999 57h1M999 58h1" stroke="#8a3fb0" stroke-opacity="0.3" stroke-width="1" fill="none"/><path d="M1193 52h1M1194 55h1M1194 55h1M1195 55h1M1195 55h1M1195 55h1M1196 52h1M1196 53h1M1196 54h1M1196 56h1M1196 57h1M1197 55h1M1197 56h1M1197 57h1M1197 57h1M1197 58h1M1197 59h1M1197 60h1M1198 54h1M1198 55h1M1198 56h1M1198 56h1M1198 57h1M1198 58h1M1198 58h1M1198 60h1M1198 60h1M1198 61h1M1199 55h1M1199 58h1M1199 61h1M1200 57h1M1200 57h1M1200 58h1M1200 59h1M1200 59h1M1200 59h1M1200 61h1M1200 62h1M1200 64h1M1201 58h1M1201 60h1M1201 61h1M1202 54h1M1203 62h1M1203 68h1M1204 58h1M1204 61h1M1204 63h1M1204 66h1M1204 67h1M1205 60h1M1205 60h1M1205 66h1M1205 68h1M1205 68h1M1205 71h1M1205 71h1M1206 62h1M1206 62h1M1206 63h1M1206 65h1M1206 67h1M1206 68h1M1207 63h1M1207 64h1M1207 69h1M1207 71h1M1207 73h1M1208 65h1M1208 68h1M1208 69h1M1209 62h1M1209 65h1M1209 66h1M1209 67h1M1209 69h1M1209 70h1M1209 74h1M1210 66h1M1210 68h1M1210 70h1M1210 72h1M1210 73h1M1211 66h1M1211 69h1M1211 71h1M1211 72h1M1211 79h1M1212 69h1M1212 71h1M1212 71h1M1212 74h1M1213 68h1M1213 71h1M1213 71h1M1213 72h1M1213 72h1M1213 73h1M1213 73h1M1213 77h1M1213 78h1M1214 69h1M1214 74h1M1214 75h1M1214 75h1M1214 76h1M1214 76h1M1215 70h1M1215 71h1M1215 71h1M1215 72h1M1215 74h1M1215 74h1M1215 75h1M1215 76h1M1216 63h1M1216 72h1M1216 73h1M1216 78h1M1216 81h1M1217 72h1M1217 73h1M1217 73h1M1217 74h1M1217 74h1M1217 76h1M1217 77h1M1217 77h1M1218 73h1M1218 73h1M1218 73h1M1218 76h1M1218 79h1M1219 74h1M1219 76h1M1219 77h1M1219 77h1M1220 72h1M1220 74h1M1220 75h1M1220 79h1M1221 71h1M1221 74h1M1221 75h1M1221 77h1M1221 78h1M1222 72h1M1222 74h1M1222 75h1M1222 76h1M1222 80h1M1222 81h1M1223 71h1M1223 75h1M1223 76h1M1223 77h1M1223 78h1M1223 79h1M1223 80h1M1224 72h1M1224 76h1M1224 78h1M1225 75h1M1225 76h1M1225 77h1M1225 79h1M1226 70h1M1226 79h1M1226 80h1M1227 73h1M1227 75h1M1227 75h1M1227 82h1M1228 77h1M1228 77h1M1228 78h1M1228 79h1M1228 82h1M1228 83h1M1229 77h1M1229 78h1M1230 72h1M1230 79h1M1230 81h1M1231 79h1M1231 81h1M1232 72h1M1232 76h1M1232 79h1M1232 81h1M1232 81h1M1233 75h1M1233 80h1M1234 75h1M1234 79h1M1234 81h1M1235 76h1M1235 77h1M1235 79h1M1235 80h1M1235 80h1M1235 82h1M1238 77h1M1238 77h1M1238 80h1M1238 81h1M1239 73h1M1239 75h1M1239 78h1M1239 78h1M1239 79h1M1239 81h1M1240 78h1M1241 76h1M1241 78h1M1241 82h1M1242 73h1M1242 75h1M1242 75h1M1242 76h1M1242 76h1M1242 79h1M1242 81h1M1243 69h1M1243 72h1M1243 75h1M1243 76h1M1243 79h1M1243 80h1M1244 74h1M1244 75h1M1244 75h1M1244 76h1M1244 81h1M1244 82h1M1245 75h1M1245 75h1M1245 77h1M1245 77h1M1245 82h1M1246 67h1M1246 69h1M1246 73h1M1246 77h1M1246 80h1M1247 73h1M1247 74h1M1247 74h1M1248 72h1M1248 76h1M1248 77h1M1249 66h1M1249 66h1M1249 74h1M1250 62h1M1250 66h1M1250 68h1M1250 68h1M1250 69h1M1250 73h1M1250 76h1M1250 76h1M1251 63h1M1251 65h1M1251 71h1M1251 71h1M1251 77h1M1252 67h1M1252 68h1M1252 70h1M1252 74h1M1253 63h1M1253 66h1M1253 68h1M1253 69h1M1254 65h1M1254 66h1M1254 67h1M1255 63h1M1255 64h1M1255 64h1M1255 65h1M1255 68h1M1255 73h1M1256 60h1M1257 58h1M1257 63h1M1257 65h1M1257 65h1M1258 63h1M1258 64h1M1258 66h1M1258 69h1M1259 62h1M1259 64h1M1259 64h1M1259 67h1M1260 54h1M1260 55h1M1260 60h1M1260 60h1M1261 49h1M1261 51h1M1261 58h1M1261 59h1M1262 54h1M1262 56h1M1262 60h1M1262 61h1M1262 62h1M1263 50h1M1263 57h1M1263 58h1M1263 58h1M1263 58h1M1263 60h1M1263 60h1M1264 48h1M1264 51h1M1264 54h1M1264 56h1M1264 57h1M1264 60h1M1264 66h1M1265 51h1M1265 52h1M1265 53h1M1265 55h1M1265 58h1M1265 62h1M1266 42h1M1266 48h1M1266 52h1M1266 53h1M1266 56h1M1267 43h1M1267 48h1M1267 48h1M1267 50h1M1267 50h1M1267 52h1M1267 53h1M1267 55h1M1268 42h1M1268 47h1M1268 47h1M1268 51h1M1268 53h1M1268 54h1M1269 43h1M1269 47h1M1269 50h1M1269 51h1M1270 46h1M1270 55h1M1270 56h1M1271 41h1M1271 41h1M1271 45h1M1271 47h1M1271 49h1M1271 50h1M1271 51h1M1272 40h1M1272 43h1M1272 43h1M1272 46h1M1272 46h1M1272 46h1M1273 45h1M1273 46h1M1274 39h1M1274 40h1M1274 41h1M1274 42h1M1274 43h1M1274 43h1M1274 44h1M1274 46h1M1274 47h1M1275 38h1M1275 39h1M1275 40h1M1275 45h1M1276 35h1M1276 39h1M1276 40h1M1276 45h1M1277 36h1M1278 36h1M1278 43h1M1278 44h1M1278 44h1M1279 24h1M1279 31h1M1279 35h1M1279 36h1M1279 38h1M1279 39h1M1280 32h1M1280 36h1M1280 39h1M1280 41h1M1281 34h1M1281 35h1M1281 35h1M1281 36h1M1281 37h1M1281 37h1M1281 38h1M1282 36h1M1282 39h1M1282 40h1M1282 41h1M1282 42h1M1283 26h1M1283 31h1M1283 34h1M1283 34h1M1283 41h1M1284 30h1M1284 30h1M1284 31h1M1284 34h1M1284 35h1M1284 37h1M1284 39h1M1286 28h1M1286 29h1M1286 29h1M1286 30h1M1286 33h1M1286 34h1M1286 34h1M1287 30h1M1287 31h1M1287 32h1M1287 33h1M1287 33h1M1288 25h1M1288 29h1M1288 29h1M1288 32h1M1288 33h1M1288 33h1M1289 23h1M1289 28h1M1289 29h1M1289 30h1M1289 32h1M1290 31h1M1290 32h1M1291 26h1M1291 26h1M1291 27h1M1291 30h1M1291 30h1M1291 32h1M1292 23h1M1292 29h1M1292 31h1M1292 33h1M1293 18h1M1293 21h1M1293 23h1M1293 28h1M1293 28h1M1293 28h1M1293 29h1M1293 30h1M1294 23h1M1294 26h1M1294 26h1M1294 26h1M1294 28h1M1294 28h1M1294 29h1M1295 24h1M1295 26h1M1295 27h1M1295 32h1M1296 27h1M1296 27h1M1296 30h1M1297 23h1M1297 23h1M1297 24h1M1297 28h1M1298 20h1M1298 21h1M1298 23h1M1298 25h1M1298 25h1M1298 26h1M1299 22h1M1299 23h1M1300 18h1M1300 24h1M1300 24h1M1300 26h1M1301 17h1M1301 19h1M1301 20h1M1302 20h1M1302 23h1M1302 23h1M1303 17h1M1303 18h1M1303 22h1M1303 23h1M1303 23h1M1304 17h1M1304 18h1M1304 20h1M1304 21h1M1304 22h1M1304 23h1M1305 19h1" stroke="#8a3fb0" stroke-opacity="0.4" stroke-width="1" fill="none"/></g><g>
<rect x="1094" y="73" width="124" height="70" fill="#ffefe3"/>
<rect x="1099.5" y="79" width="113.5" height="70" rx="4" fill="#fff"/>
<path d="M1094 44a4 4 0 0 1 4 -4h116a4 4 0 0 1 4 4v29h-124z" fill="#ffb62f"/>
<rect x="1094" y="72" width="124" height="1.3" fill="#e39a24"/>
<path d="M1098 46a3 3 0 0 1 3 -3" stroke="#ffe2ad" stroke-width="1" fill="none"/>
<g fill="#ffe9dc"><rect x="1107.2" y="83.4" width="7" height="6.8"/><rect x="1118.5" y="83.4" width="7" height="6.8"/><rect x="1129.8" y="83.4" width="7" height="6.8"/><rect x="1141.2" y="83.4" width="7" height="6.8"/><rect x="1152.5" y="83.4" width="7" height="6.8"/><rect x="1163.8" y="83.4" width="7" height="6.8"/><rect x="1186.4" y="83.4" width="7" height="6.8"/><rect x="1107.2" y="93.5" width="7" height="6.8"/><rect x="1118.5" y="93.5" width="7" height="6.8"/><rect x="1129.8" y="93.5" width="7" height="6.8"/><rect x="1141.2" y="93.5" width="7" height="6.8"/><rect x="1152.5" y="93.5" width="7" height="6.8"/><rect x="1163.8" y="93.5" width="7" height="6.8"/><rect x="1175.1" y="93.5" width="7" height="6.8"/><rect x="1186.4" y="93.5" width="7" height="6.8"/><rect x="1107.2" y="103.6" width="7" height="6.8"/><rect x="1118.5" y="103.6" width="7" height="6.8"/><rect x="1129.8" y="103.6" width="7" height="6.8"/><rect x="1141.2" y="103.6" width="7" height="6.8"/><rect x="1152.5" y="103.6" width="7" height="6.8"/><rect x="1163.8" y="103.6" width="7" height="6.8"/><rect x="1175.1" y="103.6" width="7" height="6.8"/><rect x="1186.4" y="103.6" width="7" height="6.8"/><rect x="1107.2" y="113.7" width="7" height="6.8"/><rect x="1118.5" y="113.7" width="7" height="6.8"/><rect x="1129.8" y="113.7" width="7" height="6.8"/><rect x="1141.2" y="113.7" width="7" height="6.8"/><rect x="1152.5" y="113.7" width="7" height="6.8"/><rect x="1163.8" y="113.7" width="7" height="6.8"/><rect x="1175.1" y="113.7" width="7" height="6.8"/><rect x="1186.4" y="113.7" width="7" height="6.8"/><rect x="1107.2" y="123.8" width="7" height="6.8"/><rect x="1118.5" y="123.8" width="7" height="6.8"/><rect x="1129.8" y="123.8" width="7" height="6.8"/><rect x="1175.1" y="123.8" width="7" height="6.8"/><rect x="1186.4" y="123.8" width="7" height="6.8"/></g><g fill="#ff9124"><rect x="1175.1" y="83.4" width="7" height="6.8"/><rect x="1197.8" y="83.4" width="7" height="6.8"/><rect x="1197.8" y="93.5" width="7" height="6.8"/><rect x="1197.8" y="103.6" width="7" height="6.8"/><rect x="1197.8" y="113.7" width="7" height="6.8"/><rect x="1141.2" y="123.8" width="7" height="6.8"/><rect x="1152.5" y="123.8" width="7" height="6.8"/><rect x="1163.8" y="123.8" width="7" height="6.8"/><rect x="1197.8" y="123.8" width="7" height="6.8"/></g>
<g fill="#5a3e22"><rect x="1112" y="34.5" width="9" height="17" rx="4.5"/><rect x="1138.3" y="34.5" width="9" height="17" rx="4.5"/><rect x="1164.6" y="34.5" width="9" height="17" rx="4.5"/><rect x="1191" y="34.5" width="9" height="17" rx="4.5"/></g>
</g></svg>
    <h1>Division Wise Report</h1>
    <div class="crumbs"><span class="m" style="letter-spacing:.31px">Dashboard</span><b style="margin-left:11.7px"></b><span style="letter-spacing:.5px">Attendance</span><b style="margin-left:11.5px"></b><span>Division Wise Report</span></div>
  </section>
  <section class="card f">
    <label style="left:25px;top:26px">School Division<em>*</em></label>
    <div class="inp" style="left:25px;top:49px">Lower Secondary</div>
    <label style="left:343px;top:26px">Grade</label>
    <div class="inp" style="left:343px;top:49px">All</div>
    <label style="left:661px;top:26px">Section</label>
    <div class="inp" style="left:661px;top:49px">All</div>
    <label style="left:979px;top:26px">Student Name</label>
    <div class="inp" style="left:979px;top:49px"></div>
    <label style="left:25px;top:99px;letter-spacing:.12px">HomeRoom / Class</label>
    <div class="radio"></div><div class="rlab">HomeRoom</div>
    <label style="left:343px;top:99px">From Date<em>*</em></label>
    <div class="inp d" style="left:343px;top:123px;letter-spacing:.35px">01/03/2026</div>
    <div class="add" style="left:599px;top:123px"><svg class="ico" width="16" height="16" viewBox="0 0 24 24"><path d="M4 7a2 2 0 0 1 2 -2h12a2 2 0 0 1 2 2v12a2 2 0 0 1 -2 2h-12a2 2 0 0 1 -2 -2z"/><path d="M16 3v4"/><path d="M8 3v4"/><path d="M4 11h16"/><path d="M11 15h1"/><path d="M12 15v3"/></svg></div>
    <label style="left:661px;top:99px">To Date<em>*</em></label>
    <div class="inp d" style="left:661px;top:123px;letter-spacing:.4px">23/03/2026</div>
    <div class="add" style="left:917px;top:123px"><svg class="ico" width="16" height="16" viewBox="0 0 24 24"><path d="M4 7a2 2 0 0 1 2 -2h12a2 2 0 0 1 2 2v12a2 2 0 0 1 -2 2h-12a2 2 0 0 1 -2 -2z"/><path d="M16 3v4"/><path d="M8 3v4"/><path d="M4 11h16"/><path d="M11 15h1"/><path d="M12 15v3"/></svg></div>
    <div class="btn" style="left:550px;width:89px"><svg class="ico" width="15" height="15" viewBox="0 0 24 24"><path d="M10 10m-7 0a7 7 0 1 0 14 0a7 7 0 1 0 -14 0"/><path d="M21 21l-6 -6"/></svg><span>Search</span></div>
    <div class="btn" style="left:640.5px;width:111px"><svg class="ico" width="15" height="15" viewBox="0 0 24 24"><path d="M10 10m-7 0a7 7 0 1 0 14 0a7 7 0 1 0 -14 0"/><path d="M21 21l-6 -6"/></svg><span>Detail View</span></div>
    <div class="note h" style="top:206px">Note :</div>
    <div class="note" style="top:223px;letter-spacing:-.12px">1. Names highlighted in red color are deactivated/archived student(s).</div>
    <div class="note" style="top:240px;letter-spacing:-.11px">2. Name that has * next to them in the student dropdown list are deactivated/archived student(s).</div>
    <div class="note" style="top:258px;letter-spacing:-.03px">3. Attendance reports are available for the complete academic year 2025-26. Please select dates within: 17/03/2025 to 26/04/2026.</div>
  </section>
  <section class="card t">
    <div class="rng">01/03/2026-23/03/2026</div>
    <div class="len">Show</div><div class="sel">10<svg class="ico" width="13" height="13" viewBox="0 0 24 24"><path d="M4 8l8 8l8 -8"/></svg></div><div class="ent">entries</div>
    <div class="sl">Search:</div><div class="sb"></div>
    <div class="tw"><table>
      <colgroup><col style="width:64px"><col style="width:192px"><col style="width:95px"><col style="width:71px"><col style="width:79px"><col style="width:78px"><col style="width:80px"><col style="width:75px"><col style="width:83px"><col style="width:79px"><col style="width:160px"><col style="width:172px"><col style="width:172px"></colgroup>
      <thead><tr><th class="asc" style="letter-spacing:-.2px;padding-left:14px">Sl No</th><th>Student Name</th><th>Student Id</th><th style="letter-spacing:0">Grade</th><th>Section</th><th>Gender</th><th>Present</th><th style="letter-spacing:.42px">Absent</th><th style="letter-spacing:0">Half Day</th><th style="letter-spacing:.42px">Holiday</th><th style="letter-spacing:.22px">Student Working Days</th><th style="letter-spacing:.4px">Student Attendance (%)</th><th>Total Working Days</th></tr></thead>
      <tbody>
        <tr class="o"><td>1</td><td class="n">Aarav Naik</td><td class="i">1123</td><td>Grade 6</td><td>A</td><td>Male</td><td class="c"><b>14</b></td><td class="c"><b>0</b></td><td class="c"><b>0</b></td><td class="c"><b class="h">0</b></td><td class="c"><b class="w">14</b></td><td class="p">100%</td><td class="c"><b>23</b></td></tr>
        <tr class="s"><td>2</td><td class="n">Abhijeet Sawant</td><td class="i">1178</td><td>Grade 6</td><td>A</td><td>Male</td><td class="c"><b>8</b></td><td class="c"><b>6</b></td><td class="c"><b>0</b></td><td class="c"><b class="h">0</b></td><td class="c"><b class="w">14</b></td><td class="p">57.14%</td><td class="c"><b>23</b></td></tr>
        <tr class="o"><td>3</td><td class="n">Advik More</td><td class="i">1890</td><td>Grade 6</td><td>A</td><td>Male</td><td class="c"><b>11</b></td><td class="c"><b>3</b></td><td class="c"><b>0</b></td><td class="c"><b class="h">0</b></td><td class="c"><b class="w">14</b></td><td class="p">78.57%</td><td class="c"><b>23</b></td></tr>
        <tr><td>4</td><td class="n">Anshuman Nikam</td><td class="i">1560</td><td>Grade 6</td><td>A</td><td>Male</td><td class="c"><b>14</b></td><td class="c"><b>0</b></td><td class="c"><b>0</b></td><td class="c"><b class="h">0</b></td><td class="c"><b class="w">14</b></td><td class="p">100%</td><td class="c"><b>23</b></td></tr>
        <tr class="o"><td>5</td><td class="n">Arjun Deshmukh</td><td class="i">1342</td><td>Grade 6</td><td>A</td><td>Male</td><td class="c"><b>12</b></td><td class="c"><b>2</b></td><td class="c"><b>0</b></td><td class="c"><b class="h">0</b></td><td class="c"><b class="w">14</b></td><td class="p">85.71%</td><td class="c"><b>23</b></td></tr>
      </tbody>
    </table></div>
  </section>
</main>
</body>
</html>
